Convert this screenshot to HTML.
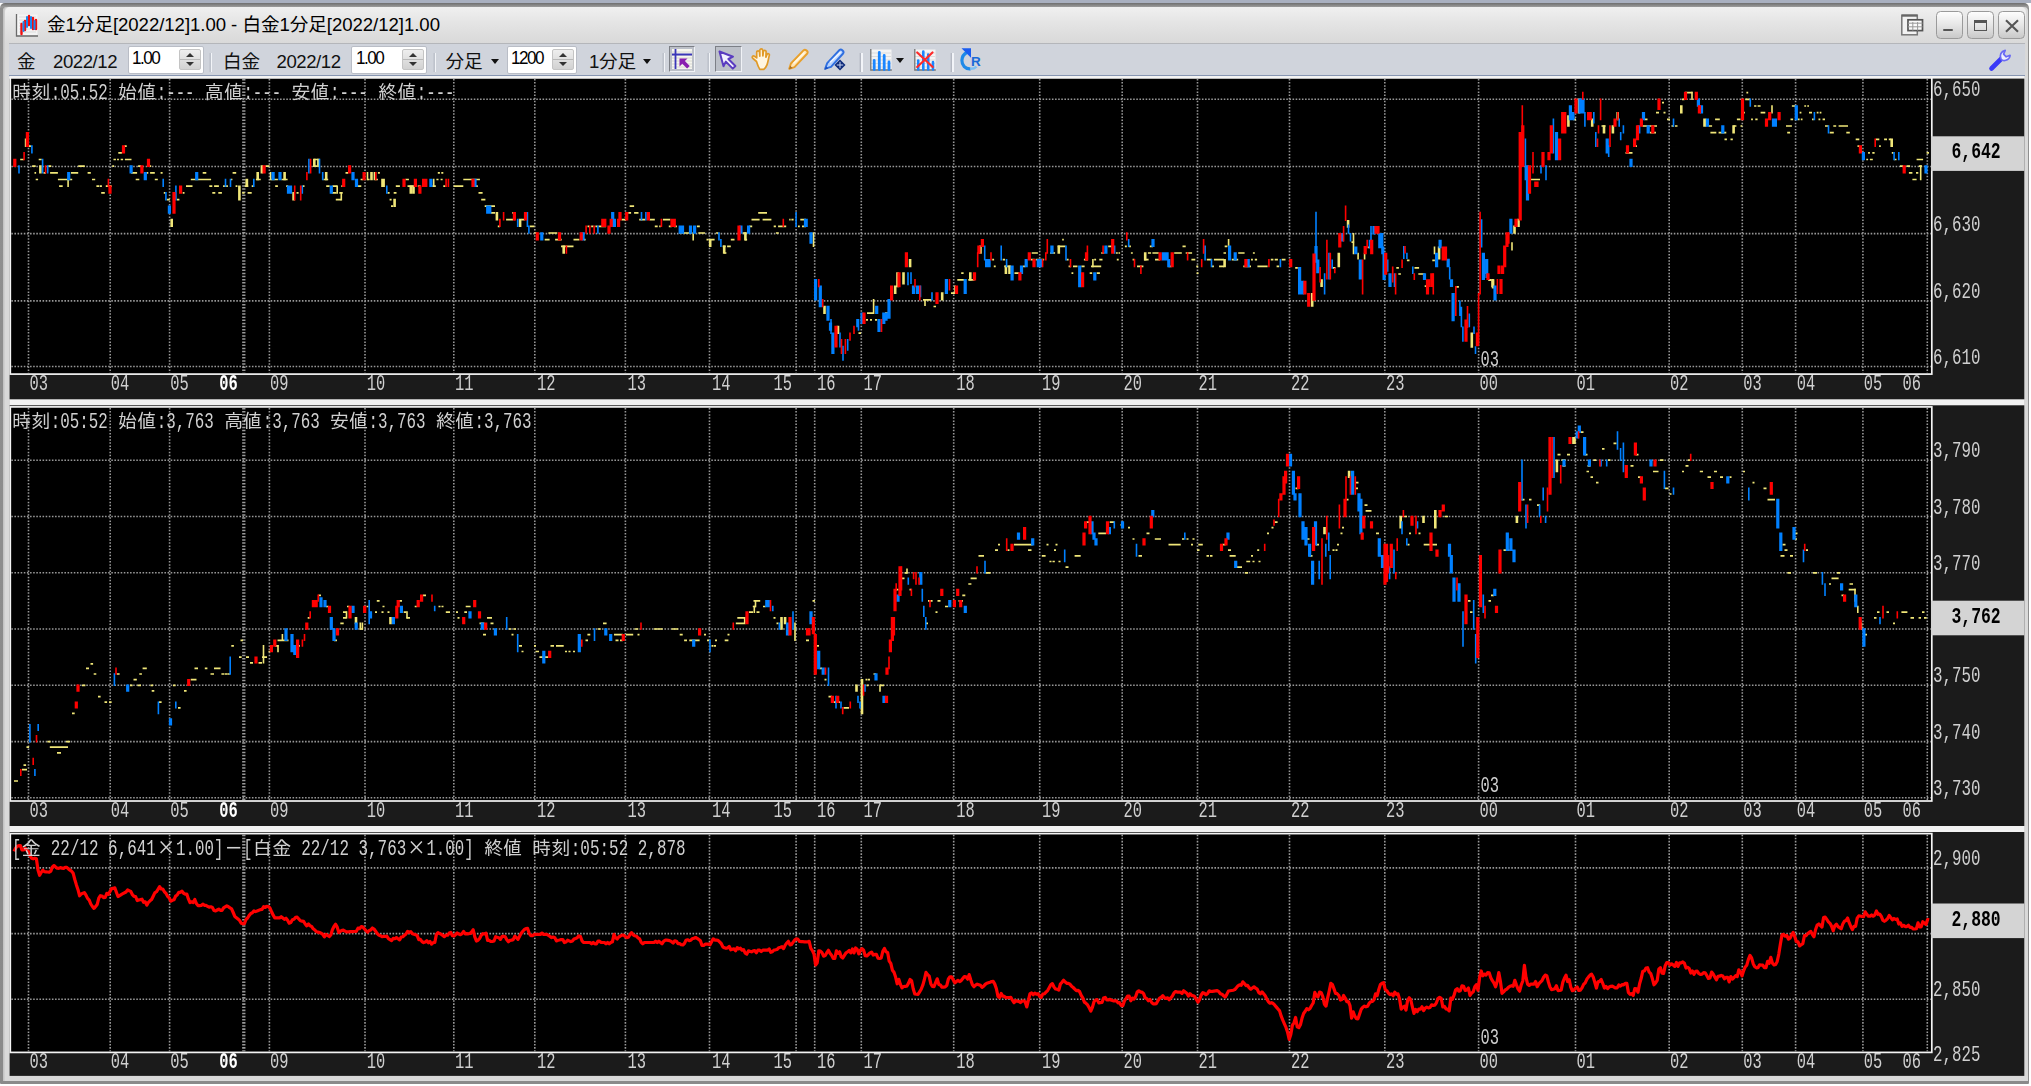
<!DOCTYPE html>
<html lang="ja"><head><meta charset="utf-8"><title>金1分足[2022/12]1.00 - 白金1分足[2022/12]1.00</title>
<style>
html,body{margin:0;padding:0}
body{width:2031px;height:1086px;position:relative;overflow:hidden;background:#fff;font-family:"Liberation Sans","Noto Sans CJK JP",sans-serif}
.abs{position:absolute}
#top{left:0;top:0;width:2031px;height:2.6px;background:#a9b0c0}
#win{left:0;top:2.6px;width:2029.2px;height:1081.2px;background:linear-gradient(#6e6e6e,#9c9c9c 4px,#909090 5px,#8a8a8a);border-radius:5px 5px 1px 1px}
#winin{left:3.4px;top:6.6px;width:2024.2px;height:1074.8px;background:#d9d9d9;border-radius:4px 4px 0 0;box-shadow:inset 1.5px 0 0 #c4c4c4}
#title{left:5px;top:7px;width:2021px;height:35.5px;background:linear-gradient(#f0f0f0,#e4e4e4 45%,#d9d9d9);border-radius:5px 5px 0 0}
#ttext{left:47px;top:12.5px;font-size:18.6px;line-height:24px;color:#000;white-space:nowrap;letter-spacing:-0.05px}
#tb{left:9px;top:43px;width:2016px;height:31.5px;background:#d0d4dc;border-top:1px solid #b4b6ba;box-sizing:border-box}
#tbline{left:9px;top:74.5px;width:2016px;height:1.7px;background:#8796b2}
.tl{position:absolute;top:49.5px;font-size:18.6px;line-height:24px;color:#111;white-space:nowrap}
.num{letter-spacing:-0.45px}
.inp{position:absolute;top:46.3px;height:27.4px;background:#fff;border:1px solid #b9bdc6;box-sizing:border-box;border-radius:2px}
.inp span{position:absolute;left:3.5px;top:-1.5px;font-size:19px;line-height:24px;color:#000;letter-spacing:-1.7px;transform:scaleX(.9);transform-origin:left}
.spin{position:absolute;right:2px;top:1.6px;width:22px;height:21.5px;background:linear-gradient(#eeeeee,#d2d2d2);border:1px solid #c4c4c4;box-sizing:border-box;border-radius:2px}
.spin:before{content:"";position:absolute;left:6px;top:3px;border:4.2px solid transparent;border-top:0;border-bottom:4.5px solid #333}
.spin:after{content:"";position:absolute;left:6px;bottom:3px;border:4.2px solid transparent;border-bottom:0;border-top:4.5px solid #333}
.spin i{position:absolute;left:0;right:0;top:9.4px;height:1px;background:#b8b8b8}
.sep{position:absolute;top:52.5px;width:1.6px;height:19px;background:#f2f4f8;box-shadow:-1.4px 0 0 #b4b8c2}
.dd{position:absolute;top:58.5px;border:4.6px solid transparent;border-bottom:0;border-top:5.2px solid #111}
.btnp{position:absolute;top:45.8px;width:26px;height:26.6px;background:#bcc0c8;border:1.4px solid #7c7f86;border-right-color:#f0f2f6;border-bottom-color:#f0f2f6;box-sizing:border-box}
.wb{position:absolute;top:11.2px;width:26.8px;height:27.5px;border:1.4px solid #9a9a9a;border-radius:4.5px;box-sizing:border-box;background:linear-gradient(#fdfdfd,#e6e6e6 50%,#c9c9c9)}
#sepw{left:9.6px;width:2014.7px;background:#f2f2f2}
</style></head><body>
<div id="top" class="abs"></div>
<div id="win" class="abs"></div>
<div id="winin" class="abs"></div>
<div id="title" class="abs"></div>
<svg class="abs" style="left:15px;top:13px" width="24" height="24" viewBox="0 0 24 24">
<rect x="1.5" y="1.5" width="21" height="21" fill="#f4f4f4"/><path d="M1.5 1v22h21.5" stroke="#6a6a6a" stroke-width="1.3" fill="none"/>
<path d="M4 4h17M4 7h17M4 10h17M4 13h17M4 16h17M4 19h17" stroke="#dcdcdc" stroke-width="1"/>
<path d="M6.5 11v10M10 8v9M14 3v9M18 5v11M21 7v9" stroke="#f01010" stroke-width="2.4" stroke-linecap="round"/>
<path d="M8.5 9v9M12 4v10M16 4v11M19.5 8v8" stroke="#1a86f0" stroke-width="2" stroke-linecap="round"/>
</svg>
<div id="ttext" class="abs">金1分足[2022/12]1.00 - 白金1分足[2022/12]1.00</div>
<!-- window buttons -->
<svg class="abs" style="left:1900px;top:13px" width="25" height="25" viewBox="0 0 25 25">
<rect x="1.8" y="2.2" width="15.5" height="19.6" fill="#f2f2f2" stroke="#777" stroke-width="1.5"/><path d="M1.8 2.6h15.5" stroke="#666" stroke-width="2.2"/>
<rect x="8" y="6.8" width="14.5" height="10.8" fill="#fafafa" stroke="#555" stroke-width="1.7"/><path d="M8 10.2h14.5M8 13.8h14.5M12.8 9v8.6M17.6 9v8.6" stroke="#999" stroke-width="1"/>
</svg>
<div class="wb" style="left:1935.8px"><div class="abs" style="left:6.5px;top:16.4px;width:9.6px;height:2.9px;background:#555;border-radius:1px"></div></div>
<div class="wb" style="left:1967px"><div class="abs" style="left:6.2px;top:7.4px;width:12.4px;height:11.4px;border:1.7px solid #555;border-top-width:3px;box-sizing:border-box"></div></div>
<div class="wb" style="left:1998.4px"><svg class="abs" style="left:5.6px;top:6.4px" width="14" height="14" viewBox="0 0 14 14"><path d="M1 1.2l12 11.6M13 1.2L1 12.8" stroke="#555" stroke-width="2.1"/></svg></div>
<!-- toolbar -->
<div id="tb" class="abs"></div><div id="tbline" class="abs"></div>
<div class="tl" style="left:17px">金</div><div class="tl num" style="left:53px">2022/12</div>
<div class="inp" style="left:127.5px;width:76px"><span>1.00</span><div class="spin"><i></i></div></div>
<div class="sep" style="left:210.5px"></div>
<div class="tl" style="left:223px">白金</div><div class="tl num" style="left:276.5px">2022/12</div>
<div class="inp" style="left:351px;width:76px"><span>1.00</span><div class="spin"><i></i></div></div>
<div class="sep" style="left:434.5px"></div>
<div class="tl" style="left:445.5px">分足</div><div class="dd" style="left:491px"></div>
<div class="inp" style="left:506.7px;width:70px"><span>1200</span><div class="spin"><i></i></div></div>
<div class="tl" style="left:589px"><span class="num">1</span>分足</div><div class="dd" style="left:642.8px"></div>
<div class="sep" style="left:663.6px"></div>
<div class="btnp" style="left:668.8px"></div>
<svg class="abs" style="left:671px;top:48px" width="22" height="22" viewBox="0 0 22 22">
<rect x="1" y="1" width="20" height="20" fill="#f6f6f0"/><path d="M1 4h20M1 7h20M1 10h20M1 13h20M1 16h20M1 19h20" stroke="#d8d8d0" stroke-width="1"/>
<path d="M4.5 1v20M1 6.5h20" stroke="#3a36b8" stroke-width="1.8"/><path d="M8.5 10.5h8l-2.6 2.6 4.8 4.8-2.6 2.6-4.8-4.8-2.8 2.8z" fill="#8a1fb0"/>
</svg>
<div class="sep" style="left:708.8px"></div>
<div class="btnp" style="left:714.6px;width:27px"></div>
<svg class="abs" style="left:716px;top:48px" width="24" height="24" viewBox="0 0 24 24">
<path d="M3.5 3.5l13.5 5.2-4.6 2.3 7 7-2.6 2.6-7-7-2.3 4.6z" fill="#f4f2ff" stroke="#5a3cc0" stroke-width="2" stroke-linejoin="round"/>
</svg>
<svg class="abs" style="left:750px;top:47px" width="24" height="25" viewBox="0 0 24 25">
<path d="M6.5 14.5L3 11.5c-1.6-1.2-.2-3.2 1.5-2.2l2.2 1.6V5.2c0-1.8 2.6-1.8 2.8 0l.3 4V3.3c0-1.8 2.8-1.8 2.9 0l.2 5.6.5-4.4c.2-1.7 2.8-1.5 2.7.3l-.2 5.4 1-2.6c.7-1.6 2.9-.8 2.4.8-1 3.8-1.2 6.500-2.200 9.200-.8 2.200-2 3.600-3.300 4.800H9.800c-1.500-2.400-2.300-4.600-3.300-7.900z" fill="#fff6e2" stroke="#e09a28" stroke-width="1.7" stroke-linejoin="round"/>
</svg>
<svg class="abs" style="left:786px;top:47px" width="25" height="25" viewBox="0 0 25 25">
<path d="M3.2 21.800l1.700-5.300L17.700 3.200c1.600-1.500 5 1.400 3.600 3.300L8.500 20.100z" fill="#ffe6b8" stroke="#e8a02c" stroke-width="1.9" stroke-linejoin="round"/><path d="M3 22.200l1.300-3.500 2.200 2.300z" fill="#a8702a"/><path d="M7.500 16.500L18.500 5.600" stroke="#fff8e6" stroke-width="1.600"/>
</svg>
<svg class="abs" style="left:822px;top:47px" width="26" height="25" viewBox="0 0 26 25">
<path d="M3.200 21.600l2-5.500L17.500 3c1.800-1.500 5.200 1.600 3.600 3.500L9 19.800z" fill="#b8d4ff" stroke="#2f6fe0" stroke-width="1.900" stroke-linejoin="round"/><path d="M2.200 23l2-3.600 2 2z" fill="#1a4fc0"/><path d="M8 15.500L18.600 5.200" stroke="#eef4ff" stroke-width="1.700"/>
<path d="M18 12.500l5.500 5.500-5.500 5.500-5.500-5.500z" fill="#0c2a7a"/><path d="M18 14.800v6.400M14.800 18h6.400" stroke="#c8d4f0" stroke-width="1"/>
</svg>
<div class="sep" style="left:861.4px"></div>
<svg class="abs" style="left:869px;top:48px" width="24" height="24" viewBox="0 0 24 24">
<rect x="2" y="1.500" width="20.500" height="20" fill="#f4f4f4"/><path d="M2 5h20M2 8.500h20M2 12h20M2 15.500h20M2 19h20" stroke="#dcdcdc" stroke-width="1"/>
<path d="M1.800 1v21h21" stroke="#777" stroke-width="1.300" fill="none"/>
<path d="M5.200 21.500v-9M10.300 21.500V4.500M15.200 21.500V7.500M20 21.500v-7.500" stroke="#1a86ff" stroke-width="2.800" stroke-linecap="round"/>
</svg>
<div class="dd" style="left:896.300px;top:58.200px"></div>
<svg class="abs" style="left:912.500px;top:48px" width="24" height="24" viewBox="0 0 24 24">
<rect x="2" y="1.500" width="20.500" height="20" fill="#f4f4f4"/><path d="M2 5h20M2 8.500h20M2 12h20M2 15.500h20M2 19h20" stroke="#dcdcdc" stroke-width="1"/>
<path d="M1.800 1v21h21" stroke="#777" stroke-width="1.300" fill="none"/>
<path d="M5.200 21.500v-9M10.300 21.500V3.500M15.200 21.500V6.500M20 21.500v-7.500" stroke="#1a86ff" stroke-width="2.600" stroke-linecap="round"/>
<path d="M4.200 4.500l15.500 14.500M19.500 4.500L4.200 19" stroke="#ff2a2a" stroke-width="2.200" stroke-linecap="round"/>
</svg>
<div class="sep" style="left:952px"></div>
<svg class="abs" style="left:958px;top:46px" width="26" height="27" viewBox="0 0 26 27">
<path d="M12.500 22.800c-5.200.4-8.700-3.700-8.600-8.400.1-3.800 2.300-6.700 5.300-8.200" stroke="#1e8ae8" stroke-width="3.200" fill="none"/><path d="M12.500 22.800c2.600 0 4.600-.8 6-2.200" stroke="#7cc0f4" stroke-width="2.400" fill="none"/>
<path d="M3.500 2.200h9.500v9.500z" fill="#1a5cf0"/>
<text x="13" y="19.500" font-family="'Liberation Sans',sans-serif" font-weight="bold" font-size="13.500" fill="#1a6ad8">R</text>
</svg>
<svg class="abs" style="left:1988px;top:47px" width="26" height="25" viewBox="0 0 26 25">
<path d="M3.500 21.500L13.500 11.500" stroke="#3a3af8" stroke-width="4.600" stroke-linecap="round"/>
<path d="M13 12c-1.800-3.400 0-7.800 4.200-8.600l-1.600 3.800 2.600 2.600 3.900-1.500c-.3 4.200-4.800 6.300-8.200 4.600z" fill="#f0f0ff" stroke="#6a6af4" stroke-width="1.700" stroke-linejoin="round"/>
</svg>
<!-- chart area -->
<div class="abs" id="sepw" style="top:76.2px;height:1000px;"></div>
<svg width="2031" height="1086" viewBox="0 0 2031 1086" style="position:absolute;left:0;top:0;will-change:transform" font-family="'Liberation Mono','IPAGothic',monospace" font-size="22">
<rect x="9.6" y="76.3" width="2014.7" height="2.5" fill="#f4f4f4"/><rect x="9.6" y="78.6" width="2014.7" height="320.7" fill="#1b1b1b"/>
<rect x="10.3" y="77.9" width="1921.5" height="296.2" fill="#000" stroke="#f4f4f4" stroke-width="1.7"/>
<path d="M11.3 99.3H1930.8M11.3 166.5H1930.8M11.3 233.6H1930.8M11.3 300.9H1930.8M11.3 366.5H1930.8M28.5 78.9V373.1M110.2 78.9V373.1M169.6 78.9V373.1M269.4 78.9V373.1M365 78.9V373.1M453.8 78.9V373.1M534.8 78.9V373.1M625.4 78.9V373.1M709.5 78.9V373.1M796.1 78.9V373.1M814.7 78.9V373.1M861.3 78.9V373.1M953.7 78.9V373.1M1039.7 78.9V373.1M1122.2 78.9V373.1M1197.5 78.9V373.1M1289.5 78.9V373.1M1384.8 78.9V373.1M1478.6 78.9V373.1M1575.5 78.9V373.1M1669.2 78.9V373.1M1742.3 78.9V373.1M1795.6 78.9V373.1M1862.9 78.9V373.1M1927.3 78.9V373.1" stroke="#989898" stroke-width="1.6" stroke-dasharray="1.5625 1.5625" fill="none"/>
<path d="M243.8 78.9V373.1" stroke="#989898" stroke-width="3.3" stroke-dasharray="1.5625 1.5625" fill="none"/>
<path d="M858.5 333.2H861M866 319.9H868M870 319.9H872M875 319.9H877M867 313.2H873M885 313.2H888M933.5 306.5H936M923 299.8H931.5M951 293.1H955M1456.3 286.9H1458.9M1424.7 286.2H1427.3M1489 280.1H1491.6M957.3 279.8H964.4M968.3 279.8H974.5M1488 279.8H1491M1398.3 274H1400.9M1418.3 274H1424.7M961.2 273.1H963.6M1014.5 273.1H1019.2M1071.5 273.1H1073.3M1089.7 273.1H1092.2M1096.7 273.1H1099.9M1196.6 273.1H1198.5M1295.2 267.9H1297.8M1332.9 267.9H1335.5M1396.3 267.9H1398.9M1414.5 267.9H1419.1M993.8 266.4H995.7M1004.3 266.4H1010.6M1023.1 266.4H1025.4M1068.6 266.4H1071.1M1073 266.4H1077.5M1081.4 266.4H1084.6M1091 266.4H1101.2M1137 266.4H1143.4M1168.4 266.4H1171.6M1196.3 266.4H1198.2M1211.9 266.4H1213.9M1219 266.4H1224.1M1243.3 266.4H1251M1257.4 266.4H1267.6M1276.6 266.4H1279.1M1406.9 260.3H1409.5M1432.3 260.3H1434.9M992.2 259.7H994.1M1002.7 259.7H1005.1M1030.9 259.7H1034.8M1035.6 259.7H1044.2M1066.6 259.7H1068.6M1083.9 259.7H1087.8M1094.2 259.7H1096.1M1099.3 259.7H1102.5M1116.8 259.7H1118.7M1132.6 259.7H1134.5M1144.1 259.7H1148.6M1155 259.7H1160.1M1191.4 259.7H1195.3M1206.8 259.7H1211.9M1213.9 259.7H1224.1M1231.8 259.7H1238.2M1251 259.7H1252.9M1254.8 259.7H1257.1M1270.8 259.7H1273.4M1274.7 259.7H1277.9M1281.7 259.7H1285.5M724.2 253H726.4M1031.7 253H1037.9M1050 253H1055.1M1101.2 253H1104.4M1115.9 253H1117.8M1118.5 253H1120.1M1130.9 253H1132.8M1147.9 253H1151.1M1152.4 253H1158.8M1174.2 253H1181.8M1185.7 253H1192.1M1223.5 253H1226M1238.2 253H1244.6M1252.9 253H1254.8M1367.7 247.4H1370.3M561 246.3H573.5M722.7 246.3H725.7M727.1 246.3H730.8M1057.7 246.3H1065.4M1108.2 246.3H1114M1124.9 246.3H1126.8M1128.7 246.3H1130.9M1149.8 246.3H1153M1182.5 246.3H1185.7M1224.7 246.3H1227.3M1351.5 242.1H1354.1M544.7 239.7H549.6M555.1 239.7H561.7M573.5 239.7H579.4M583.9 239.7H585.6M706.5 239.7H708.7M710.1 239.7H714.6M730.8 239.7H734.5M744.9 239.7H747.1M1062.2 239.7H1063.8M534.4 233H536.6M548.4 233H557.3M679.1 233H691.7M698.3 233H705M716.1 233H718.3M742.6 233H746.3M775.9 233H778.8M497.8 226.3H499.9M529.9 226.3H534.4M587.5 226.3H589.3M591.2 226.3H593.5M595.4 226.3H597.4M598.6 226.3H606M654.8 226.3H657.7M659.2 226.3H660.7M668.8 226.3H671.7M674 226.3H676.9M696.9 226.3H699.8M749.3 226.3H752.2M773.7 226.3H775.9M778.1 226.3H786.2M798 226.3H799.8M802 226.3H806M506.1 219.6H513M521.1 219.6H524.8M621.5 219.6H626M639.2 219.6H645.2M649.6 219.6H654.8M662.9 219.6H670.3M751.5 219.6H759.6M762.6 219.6H771.4M789.2 219.6H790.6M791.4 219.6H793.6M800.3 219.6H806M490.9 212.9H495M512.2 212.9H514.4M628.2 212.9H631.1M634.1 212.9H638.5M758.2 212.9H767M391 206.2H393M484.7 206.2H495M629.6 206.2H634.1M166.8 199.6H169.8M177 199.6H179.4M335.8 199.6H341.3M389.6 199.6H391.6M481.2 199.6H485.4M101.2 192.9H104.8M163.8 192.9H165.6M182.7 192.9H184.5M212.3 192.9H215.3M218.3 192.9H221.9M242.2 192.9H244.6M247.6 192.9H251.7M296.5 192.9H298.6M331.7 192.9H336.5M339.3 192.9H342.7M387.5 192.9H389.6M393.7 192.9H396.5M478.5 192.9H482.6M59.1 186.2H62.7M96.4 186.2H99.2M99.8 186.2H101.9M105.8 186.2H111.7M186 186.2H192.5M209.3 186.2H212.3M214.1 186.2H218.9M223.1 186.2H224.9M226.1 186.2H227.9M235.6 186.2H237.4M244.8 186.2H248.2M251.7 186.2H253.8M275.2 186.2H277.9M286.2 186.2H288.2M302.7 186.2H304.5M326.2 186.2H329.6M332.4 186.2H337.2M341.3 186.2H343.4M356.5 186.2H361.3M395.8 186.2H399.9M407.5 186.2H413.7M417.8 186.2H420.6M432.3 186.2H435.8M443.3 186.2H445.4M453.7 186.2H463.3M474.4 186.2H477.8M35.7 179.5H38.1M57.9 179.5H72.2M92 179.5H95.2M135.7 179.5H139.3M154.8 179.5H157.8M190.8 179.5H211.1M230.9 179.5H232.4M255.9 179.5H260.7M271 179.5H277.9M281.4 179.5H287.6M323.4 179.5H328.2M360.6 179.5H363.4M367.5 179.5H369.6M375.8 179.5H377.9M405.4 179.5H408.9M436.4 179.5H438.5M440.6 179.5H442.6M463.3 179.5H479.9M1531 179.5H1540M1912.4 179.5H1916.6M34.5 172.8H36.1M43.5 172.8H45.9M50.1 172.8H57.9M71 172.8H78.2M87.6 172.8H90.8M131.1 172.8H137.1M146.5 172.8H148.3M150.1 172.8H154.8M160.6 172.8H162.6M202.7 172.8H206.3M232.6 172.8H236.2M345.5 172.8H348.2M377.9 172.8H379.9M437.8 172.8H439.9M441.3 172.8H443.3M1908.9 172.8H1912.4M1916 172.8H1918.3M32.1 166.1H35.7M48.3 166.1H51.3M78.2 166.1H84.8M112.3 166.1H114.1M138.1 166.1H141.1M147.7 166.1H151.2M265.5 166.1H269.6M313.1 166.1H317.2M1900 166.1H1903M1906.5 166.1H1910.1M1918.9 166.1H1921.9M20.2 159.5H23.8M38.7 159.5H41.7M113.5 159.5H115.9M117.1 159.5H118.9M120.7 159.5H123.1M124.9 159.5H131.5M313.8 159.5H318.6M1866.3 159.5H1868.1M1869.9 159.5H1872.8M1894.1 159.5H1896.5M1916.6 159.5H1923.1M118.3 152.8H121.9M1625.5 152.8H1632.5M1868.1 152.8H1869.9M1872.3 152.8H1874.6M1891.8 152.8H1893.5M1926.6 152.8H1929M28 146.1H30.9M124.3 146.1H126.7M1633 146.1H1637M1857.5 146.1H1859.3M1879.1 146.1H1880.8M1724.5 139.4H1726.9M1730.5 139.4H1732.8M1855.7 139.4H1859.3M1875.8 139.4H1879.3M1884.1 139.4H1887M1888.8 139.4H1891.2M1650 132.7H1656M1710.4 132.7H1716.3M1718.6 132.7H1726.3M1787.2 132.7H1790.1M1829.7 132.7H1833.8M1846.3 132.7H1849.8M1601.5 126H1605.5M1642.5 126H1657M1671.5 126H1674M1675 126H1677.5M1708.6 126H1712.1M1733.4 126H1736.4M1740.5 126H1742.3M1786 126H1791.9M1825 126H1828.5M1833.3 126H1836.2M1838.6 126H1848M1573 119.4H1576M1644.5 119.4H1647.5M1667 119.4H1670M1715.1 119.4H1719.8M1736.9 119.4H1740.5M1751.1 119.4H1752.9M1755.3 119.4H1757.6M1790.5 119.4H1793.1M1797.8 119.4H1799.6M1800.8 119.4H1802.5M1812 119.4H1813.8M1818.5 119.4H1820.3M1822.6 119.4H1825M1656 112.7H1659M1663.5 112.7H1665.5M1743.4 112.7H1744.9M1760.6 112.7H1765.3M1799.6 112.7H1801.4M1809 112.7H1812M1816.7 112.7H1818.5M1819.7 112.7H1821.4M1754.1 106H1756.4M1757.6 106H1760.6M1791.9 106H1795.4M1804.3 106H1806.1M1807.3 106H1809M1662 102.6H1664M1682 99.3H1684.5M1745.2 99.3H1749.9M1685 92.6H1692.5M1746.4 92.6H1748.2" stroke="#f0e678" stroke-width="1.7" fill="none"/>
<path d="M1311.7 293V306.7M1312.7 293V306.7M1321.1 279.3V287M1322.1 279.3V287M1338.3 252.7V267.2M1339.3 252.7V267.2M1347.6 220V227.7M1348.6 220V227.7M1353.5 233V254.3M1358.1 252.7V259.6M1364.6 252.7V259.6M1434.5 246.6V254.3M1438.6 246.6V259.6M1439.6 246.6V259.6M1471.3 332.5V347.8M1472.3 332.5V347.8M1492.6 279.3V288.5M1493.6 279.3V288.5M1492 279V287.2M1493 279V287.2M1512 242.2V250.5M1514 225.5V233.8M1515 225.5V233.8M1518 218.8V227.1M1519 218.8V227.1M1567.9 115.2V126.8M1568.9 115.2V126.8M1578.5 98.5V113.5M1579.5 98.5V113.5M1591.7 118.6V126.8M1592.7 118.6V126.8M1603.5 125.2V133.5M1604.5 125.2V133.5M1612.4 125.2V133.5M1613.4 125.2V133.5M1617.2 111.9V120.2M1618.2 111.9V120.2M1680.8 105.2V113.5M1681.8 105.2V113.5M1692 91.8V100.1M1704 118.6V126.8M1705 118.6V126.8M813.5 232.2V247.1M824 305.7V314M825 305.7V314M837.5 325.7V334M838.5 325.7V334M873.6 299V314M894.7 285.6V293.9M895.7 285.6V293.9M897 272.3V287.2M898 272.3V287.2M903 272.3V284.6M904 272.3V284.6M909.6 258.9V267.2M910.6 258.9V267.2M925 299V306M941.7 292.3V300.6M942.7 292.3V300.6M25.6 138.6V146.9M26.6 138.6V146.9M39.9 165.3V173.6M40.9 165.3V173.6M68.1 178.7V187M171.2 218.8V227.1M172.2 218.8V227.1M238.9 185.4V200.4M239.9 185.4V200.4M246.4 178.7V187M247.4 178.7V187M246.2 178.7V187M257.2 172V180.3M258.2 172V180.3M261.4 165.3V173.6M262.4 165.3V173.6M270.6 172V180.3M284.1 172V180.3M285.1 172V180.3M293.1 192.1V200.4M294.1 192.1V200.4M313.8 158.7V166.9M314.8 158.7V166.9M317.9 158.7V166.9M318.9 158.7V166.9M325.7 172V180.3M326.7 172V180.3M337.2 185.4V193.7M341.3 192.1V200.4M367.5 172V180.3M371 172V180.3M372 172V180.3M374.4 172V180.3M375.4 172V180.3M382 178.7V187M383 178.7V187M384.1 178.7V187M394.1 198.8V207M395.1 198.8V207M410.3 185.4V193.7M411.3 185.4V193.7M413 185.4V193.7M414 185.4V193.7M433.7 178.7V187M496.4 212.1V220.4M497.4 212.1V220.4M519.6 218.8V227.1M520.6 218.8V227.1M563.2 245.5V253.8M564.2 245.5V253.8M693.2 232.2V240.5M709.7 238.9V247.1M710.7 238.9V247.1M723.7 245.5V253.8M724.7 245.5V253.8M744.9 232.2V240.5M745.9 232.2V240.5M955 285.6V293.9M969.8 272.3V280.6M970.8 272.3V280.6M980 245.5V253.8M981 245.5V253.8M1005.4 265.6V273.9M1006.4 265.6V273.9M1009 265.6V273.9M1010 265.6V273.9M1058.3 245.5V253.8M1059.3 245.5V253.8M1092.9 258.9V267.2M1144.7 252.2V260.5M1145.7 252.2V260.5M1224.1 258.9V267.2M1225.1 258.9V267.2M1228.6 238.9V247.1M1704.5 118.6V126.8M1705.5 118.6V126.8M1733.1 125.2V133.5M1734.1 125.2V133.5M1772 105.2V113.5M1891.2 138.6V146.9M1892.2 138.6V146.9M1920.7 165.3V180.3" stroke="#f0e678" stroke-width="1.6" fill="none"/>
<path d="M1299.6 267.1V294.6M1302.6 280.8V294.6M1316 245.9V262.7M1317.8 259.5V273.3M1342.4 233V241.4M1355.8 246.6V254.3M1360.3 259.5V279.4M1374 226.1V234.6M1379.8 233V248.2M1381.8 233V248.2M1382.8 246.6V254.3M1384.1 252.7V280.1M1390 273.2V287M1424.5 273.2V280.1M1436.6 252.7V267.2M1440.1 239.8V248.2M1448.2 258.8V267.2M1451.5 279.3V287M1453.1 293V321.2M1483.4 252.7V280.1M1486.7 258.9V273.9M1495 285.6V300.6M1510.9 218.8V233.8M1527.5 165.3V200.4M1556.5 131.9V160.3M1570.4 105.2V120.2M1573 111.9V120.2M1580 98.5V113.5M1583 98.5V113.5M1607.2 138.6V153.6M1631 158.7V166.9M1638.8 125.2V133.5M1643.5 111.9V120.2M1648.2 125.2V133.5M1698.4 98.5V106.8M1701.5 105.2V113.5M805.5 218.8V227.1M811 232.2V243.8M815.6 279V300.6M820.3 285.6V307.3M828 305.7V320.7M830.5 322.4V330.7M832.9 332.4V354.1M862 312.4V324M876.7 305.7V314M879 319.1V332M883.8 312.4V324M886 312.4V320.7M889 299V318.7M913.5 285.6V293.9M917.4 285.6V293.9M946.4 279V293.9M68.7 172V180.3M131.1 165.3V173.6M145.3 172V180.3M169.4 205.4V213.7M196.7 172V180.3M273.1 172V180.3M280 172V180.3M288.5 185.4V193.7M290.5 185.4V193.7M331.3 185.4V193.7M353 172V180.3M356.5 178.7V187M430.9 178.7V187M475 178.7V187M487.7 205.4V213.7M489.8 205.4V213.7M541.8 232.2V240.5M583.1 232.2V240.5M612.7 212.1V227.1M614.4 218.8V227.1M680.2 225.5V233.8M682.5 225.5V233.8M690.5 225.5V233.8M694.6 225.5V233.8M740.9 225.5V233.8M748.6 225.5V233.8M806.2 218.8V227.1M965.2 279V293.9M986.6 258.9V267.2M989.1 258.9V267.2M1012.1 265.6V280.6M1021.5 265.6V273.9M1026.2 258.9V267.2M1038.3 258.9V267.2M1040.8 258.9V267.2M1052 245.5V253.8M1051.9 245.5V253.8M1079.7 265.6V287.2M1094.8 272.3V280.6M1105.9 245.5V253.8M1153 238.9V247.1M1163.3 252.2V260.5M1165.2 252.2V260.5M1167.1 252.2V260.5M1168.8 258.9V267.2M1229.6 245.5V260.5M1235.2 252.2V260.5M1248.2 258.9V267.2M1707.4 118.6V126.8M1722.8 125.2V133.5M1773.5 118.6V126.8M1775.4 118.6V126.8M1796.3 105.2V120.2M1863.4 152V160.3M1926 165.3V173.6" stroke="#0080ff" stroke-width="3.2" fill="none"/>
<path d="M1316 211.7V247.5M1324.6 273.2V294.6M1329 252.7V279.4M1332.2 259.5V268.7M1348.5 224.6V233.8M1350.5 233V241.4M1369.5 239.8V248.2M1371 226.1V241.4M1387.7 259.5V271.8M1394.5 273.2V287M1403.8 245.9V258.9M1406.9 252.7V258.9M1412.8 266.4V274.1M1449.7 267.1V279.4M1459.9 300.6V315.9M1461.4 306.7V327.3M1462.9 326.4V341.7M1469.3 313.5V327.3M1474 326.4V334.1M1475.5 346.2V353.9M1481.6 219.3V247.5M1486.2 259.5V277.9M1525.4 138.6V180.3M1541 165.3V173.6M1546 165.3V180.3M1553.4 118.6V153.6M1584.9 111.9V126.8M1593.8 111.9V123.5M1595.8 131.9V146.9M1608.7 145.3V156.9M1619.2 118.6V126.8M1620.7 131.9V140.2M1623.4 125.2V133.5M1673.5 118.6V126.8M831 319.1V334M840 332.4V347.4M843 345.8V360.8M847.7 339.1V350.7M857 319.1V327.3M858.5 319.1V330.7M908 272.3V285.2M911 272.3V283.9M920.5 285.6V297.3M932 292.3V300.6M19 165.3V173.6M31.9 145.3V153.6M42.6 158.7V173.6M47.7 165.3V173.6M163.2 178.7V187M165.9 192.1V200.4M175.9 185.4V200.4M225.5 178.7V187M230.5 178.7V187M253.8 178.7V187M302.3 185.4V193.7M308.9 158.7V173.6M319.5 158.7V173.6M322.7 172V180.3M386.8 185.4V193.7M517.7 218.8V227.1M527.4 212.1V227.1M528.9 225.5V233.8M597.9 225.5V233.8M641.5 212.1V220.4M645.9 212.1V220.4M719 232.2V240.5M720.9 238.9V247.1M796.1 212.1V227.1M984.7 245.5V260.5M1001.2 245.5V260.5M1006.6 258.9V267.2M1066 245.5V260.5M1114.6 245.5V253.8M1128.7 238.9V247.1M1205.1 245.5V260.5M1211.5 258.9V267.2M1280.4 258.9V267.2M1750.3 98.5V106.8M1814.4 111.9V120.2M1828.5 125.2V133.5M1894.1 152V160.3M1898.8 152V160.3" stroke="#0080ff" stroke-width="1.6" fill="none"/>
<path d="M1304.9 280.8V294.6M1308.7 293V306.7M1314 253.5V300.7M1339.8 233V247.5M1365.2 245.9V254.3M1371.7 239.8V254.3M1376 226.1V233.8M1378 226.1V233.8M1385.7 252.7V274.8M1427.5 279.3V294.6M1431.8 273.2V287M1443.2 246.6V260.4M1445.5 246.6V260.4M1466 319.6V341.7M1477.4 332.5V346.3M1488 273.2V280.1M1499 265.6V273.9M1501 279V293.9M1502.6 265.6V273.9M1504.7 245.5V267.2M1507 232.2V247.1M1516 218.8V227.1M1520.2 131.9V220.4M1522.8 125.2V166.9M1529.5 165.3V193.7M1535.8 181.4V187M1537 181.4V187M1543 152V166.9M1549 152V160.3M1551.3 125.2V153.6M1559.6 138.6V160.3M1562.7 111.9V133.5M1564.8 111.9V133.5M1576 98.5V113.5M1588.6 111.9V120.2M1590.2 111.9V120.2M1615 118.6V126.8M1627.5 145.3V153.6M1634.6 138.6V146.9M1637.5 125.2V140.2M1641.4 118.6V126.8M1652.8 125.2V133.5M1659 98.5V110.1M1685.5 91.8V100.1M1696.3 91.8V100.1M1699.4 105.2V113.5M836 325.7V347.4M864 312.4V324M891.6 285.6V300.6M899 272.3V287.2M906.4 252.2V267.2M937 292.3V303.9M14.8 158.7V166.9M27.4 131.9V146.9M110 185.4V193.7M123.5 145.3V153.6M141.9 165.3V173.6M148.5 158.7V166.9M174 192.1V213.7M180.6 185.4V193.7M264.1 165.3V173.6M343.7 178.7V187M349.6 165.3V173.6M364.1 172V180.3M404 178.7V187M415.4 178.7V187M419.9 185.4V193.7M423.6 178.7V187M425.8 178.7V187M473 178.7V187M514.4 212.1V220.4M525.5 212.1V220.4M537.3 232.2V240.5M559.5 232.2V240.5M581.2 232.2V240.5M602.8 218.8V227.1M604.8 218.8V227.1M609 225.5V233.8M611.2 218.8V227.1M618.6 218.8V227.1M620 212.1V220.4M626.7 212.1V220.4M648.4 212.1V220.4M672 218.8V227.1M674.3 218.8V227.1M739 225.5V240.5M956.5 285.6V293.9M974.5 272.3V280.6M978.9 245.5V253.8M982.4 238.9V247.1M1019.9 272.3V280.6M1029.3 252.2V260.5M1034 258.9V267.2M1082.6 272.3V287.2M1086.5 252.2V260.5M1112.7 238.9V253.8M1160.1 252.2V260.5M1172.2 252.2V267.2M1245.9 258.9V267.2M1290.7 258.9V267.2M1742.5 98.5V120.2M1766.5 118.6V126.8M1769.7 111.9V120.2M1779.1 111.9V120.2M1860.4 145.3V153.6M1904.2 165.3V173.6" stroke="#ff0000" stroke-width="3.2" fill="none"/>
<path d="M1320.1 267.1V282.4M1326.9 239.8V279.4M1330.3 252.7V279.4M1334.8 267.9V273.3M1343.6 226.1V241.4M1345.6 205.6V220.9M1362.6 259.5V294.6M1367.2 239.8V248.2M1392.7 266.4V282.4M1395.6 273.2V294.6M1402.1 259.5V268M1405 245.9V253.6M1414.3 273.2V280.1M1429.5 279.3V287M1433.3 273.2V294.6M1455.8 286.1V315.9M1467.5 305.9V328M1478.6 293V344.7M1480.1 211.7V294.6M1497.4 279V293.9M1508.8 232.2V243.8M1522.3 105.2V166.9M1533 152V173.6M1582.8 91.8V100.1M1597.5 138.6V146.9M1598.5 125.2V133.5M1600.6 98.5V120.2M1610 125.2V146.9M1617.8 111.9V120.2M818.8 279V287.2M822.7 299V307.3M841.5 339.1V354.1M845.4 339.1V354.1M850 332.4V340.7M854 325.7V334M881.5 319.1V332M915 279V287.2M919.8 285.6V300.6M949.5 279V290.6M24.1 152V160.3M45.6 165.3V173.6M108.4 178.7V187M294.7 185.4V200.4M300.7 185.4V200.4M306.9 172V180.3M310.6 158.7V173.6M375.8 172V180.3M446.1 178.7V187M448.4 178.7V187M499.9 218.8V227.1M503.6 212.1V220.4M514.3 212.1V220.4M566.4 245.5V253.8M586.1 225.5V233.8M589.8 225.5V233.8M594.2 225.5V233.8M661.4 218.8V227.1M783.3 218.8V227.1M977.7 252.2V267.2M991 252.2V260.5M1042.6 258.9V267.2M1045.8 252.2V260.5M1047.3 238.9V253.8M1070.5 258.9V267.2M1087.4 245.5V260.5M1103.1 245.5V253.8M1126.8 232.2V240.5M1134.5 258.9V267.2M1140.9 265.6V273.9M1187.6 252.2V260.5M1201.7 258.9V267.2M1203.6 238.9V253.8M1268.9 258.9V267.2M1875.2 138.6V146.9" stroke="#ff0000" stroke-width="1.6" fill="none"/>
<text y="98.9" fill="#d0d0d0"><tspan x="12 31.3" font-size="19.3">時刻</tspan><tspan x="50.8" textLength="57" lengthAdjust="spacingAndGlyphs">:05:52</tspan> <tspan x="117.9 137.2" font-size="19.3">始値</tspan><tspan x="156.8" textLength="37.7" lengthAdjust="spacingAndGlyphs">:---</tspan> <tspan x="204.6 223.9" font-size="19.3">高値</tspan><tspan x="243.4" textLength="37.7" lengthAdjust="spacingAndGlyphs">:---</tspan> <tspan x="291.3 310.5" font-size="19.3">安値</tspan><tspan x="330.1" textLength="37.7" lengthAdjust="spacingAndGlyphs">:---</tspan> <tspan x="377.9 397.2" font-size="19.3">終値</tspan><tspan x="416.8" textLength="37.7" lengthAdjust="spacingAndGlyphs">:---</tspan></text>
<text y="366" fill="#d0d0d0"><tspan x="1480.5" textLength="18.5" lengthAdjust="spacingAndGlyphs">03</tspan></text>
<text y="389.6" fill="#d0d0d0"><tspan x="29.6" textLength="18.5" lengthAdjust="spacingAndGlyphs">03</tspan></text>
<text y="389.6" fill="#d0d0d0"><tspan x="110.8" textLength="18.5" lengthAdjust="spacingAndGlyphs">04</tspan></text>
<text y="389.6" fill="#d0d0d0"><tspan x="170.3" textLength="18.5" lengthAdjust="spacingAndGlyphs">05</tspan></text>
<text y="389.6" fill="#ffffff" font-weight="bold"><tspan x="219.3" textLength="18.5" lengthAdjust="spacingAndGlyphs">06</tspan></text>
<text y="389.6" fill="#d0d0d0"><tspan x="270.1" textLength="18.5" lengthAdjust="spacingAndGlyphs">09</tspan></text>
<text y="389.6" fill="#d0d0d0"><tspan x="366.8" textLength="18.5" lengthAdjust="spacingAndGlyphs">10</tspan></text>
<text y="389.6" fill="#d0d0d0"><tspan x="455.1" textLength="18.5" lengthAdjust="spacingAndGlyphs">11</tspan></text>
<text y="389.6" fill="#d0d0d0"><tspan x="537.1" textLength="18.5" lengthAdjust="spacingAndGlyphs">12</tspan></text>
<text y="389.6" fill="#d0d0d0"><tspan x="627.6" textLength="18.5" lengthAdjust="spacingAndGlyphs">13</tspan></text>
<text y="389.6" fill="#d0d0d0"><tspan x="712.1" textLength="18.5" lengthAdjust="spacingAndGlyphs">14</tspan></text>
<text y="389.6" fill="#d0d0d0"><tspan x="773.6" textLength="18.5" lengthAdjust="spacingAndGlyphs">15</tspan></text>
<text y="389.6" fill="#d0d0d0"><tspan x="817.1" textLength="18.5" lengthAdjust="spacingAndGlyphs">16</tspan></text>
<text y="389.6" fill="#d0d0d0"><tspan x="863.6" textLength="18.5" lengthAdjust="spacingAndGlyphs">17</tspan></text>
<text y="389.6" fill="#d0d0d0"><tspan x="956.3" textLength="18.5" lengthAdjust="spacingAndGlyphs">18</tspan></text>
<text y="389.6" fill="#d0d0d0"><tspan x="1041.9" textLength="18.5" lengthAdjust="spacingAndGlyphs">19</tspan></text>
<text y="389.6" fill="#d0d0d0"><tspan x="1123.6" textLength="18.5" lengthAdjust="spacingAndGlyphs">20</tspan></text>
<text y="389.6" fill="#d0d0d0"><tspan x="1198.5" textLength="18.5" lengthAdjust="spacingAndGlyphs">21</tspan></text>
<text y="389.6" fill="#d0d0d0"><tspan x="1291" textLength="18.5" lengthAdjust="spacingAndGlyphs">22</tspan></text>
<text y="389.6" fill="#d0d0d0"><tspan x="1386.1" textLength="18.5" lengthAdjust="spacingAndGlyphs">23</tspan></text>
<text y="389.6" fill="#d0d0d0"><tspan x="1479.6" textLength="18.5" lengthAdjust="spacingAndGlyphs">00</tspan></text>
<text y="389.6" fill="#d0d0d0"><tspan x="1576.4" textLength="18.5" lengthAdjust="spacingAndGlyphs">01</tspan></text>
<text y="389.6" fill="#d0d0d0"><tspan x="1670" textLength="18.5" lengthAdjust="spacingAndGlyphs">02</tspan></text>
<text y="389.6" fill="#d0d0d0"><tspan x="1743.3" textLength="18.5" lengthAdjust="spacingAndGlyphs">03</tspan></text>
<text y="389.6" fill="#d0d0d0"><tspan x="1796.7" textLength="18.5" lengthAdjust="spacingAndGlyphs">04</tspan></text>
<text y="389.6" fill="#d0d0d0"><tspan x="1863.7" textLength="18.5" lengthAdjust="spacingAndGlyphs">05</tspan></text>
<text y="389.6" fill="#d0d0d0"><tspan x="1902.6" textLength="18.5" lengthAdjust="spacingAndGlyphs">06</tspan></text>
<text y="96.4" fill="#d0d0d0"><tspan x="1933.1" textLength="47.4" lengthAdjust="spacingAndGlyphs">6,650</tspan></text>
<text y="230.7" fill="#d0d0d0"><tspan x="1933.1" textLength="47.4" lengthAdjust="spacingAndGlyphs">6,630</tspan></text>
<text y="298" fill="#d0d0d0"><tspan x="1933.1" textLength="47.4" lengthAdjust="spacingAndGlyphs">6,620</tspan></text>
<text y="363.6" fill="#d0d0d0"><tspan x="1933.1" textLength="47.4" lengthAdjust="spacingAndGlyphs">6,610</tspan></text>
<rect x="1931" y="136.3" width="93.3" height="34.6" fill="#d4d4d4"/>
<text y="158.4" fill="#000" font-weight="bold"><tspan x="1951.5" textLength="49.2" lengthAdjust="spacingAndGlyphs">6,642</tspan></text>
<rect x="9.6" y="405.3" width="2014.7" height="420.7" fill="#1b1b1b"/>
<rect x="10.3" y="406.9" width="1921.5" height="394.1" fill="#000" stroke="#f4f4f4" stroke-width="1.7"/>
<path d="M11.3 460.2H1930.8M11.3 516.5H1930.8M11.3 572.8H1930.8M11.3 629H1930.8M11.3 685.3H1930.8M11.3 741.6H1930.8M11.3 797.8H1930.8M28.5 407.9V800M110.2 407.9V800M169.6 407.9V800M269.4 407.9V800M365 407.9V800M453.8 407.9V800M534.8 407.9V800M625.4 407.9V800M709.5 407.9V800M796.1 407.9V800M814.7 407.9V800M861.3 407.9V800M953.7 407.9V800M1039.7 407.9V800M1122.2 407.9V800M1197.5 407.9V800M1289.5 407.9V800M1384.8 407.9V800M1478.6 407.9V800M1575.5 407.9V800M1669.2 407.9V800M1742.3 407.9V800M1795.6 407.9V800M1862.9 407.9V800M1927.3 407.9V800" stroke="#989898" stroke-width="1.6" stroke-dasharray="1.5625 1.5625" fill="none"/>
<path d="M243.8 407.9V800" stroke="#989898" stroke-width="3.3" stroke-dasharray="1.5625 1.5625" fill="none"/>
<path d="M14 781H18M22 769.7H27M23.5 765.2H26.1M57 752.8H61M26.5 747.2H29.1M49.8 747.2H68M47.3 741.6H50.6M66 741.6H70M72 713.4H74.7M178 707.8H180.6M843.5 707.8H849M104.5 702.2H107.1M109 702.2H111.6M159 702.2H161.6M834 702.2H840M98 696.6H100.6M828.5 696.6H832M151.7 690.9H154.3M184 690.9H186.6M82 685.3H85.4M130 685.3H132.6M137.5 685.3H141M150.5 685.3H153.1M173 685.3H175.6M866.5 685.3H868.5M880 685.3H884M133.5 679.7H136.8M190.7 679.7H196.5M824.5 679.7H826.5M865.5 679.7H867.5M868 679.7H870M93.7 674H96.3M117 674H119.6M139.3 674H141.9M210.5 674H214M221.4 674H224M224.5 674H227.1M227.3 674H229.9M873.5 674H876M86 668.4H89M142.6 668.4H146.8M194.5 668.4H198M204.8 668.4H207.4M214 668.4H220.5M819.5 668.4H822M90.5 663.9H93.1M250 662.8H253M258.5 662.8H262M239 657.2H241.6M246 657.2H249M262 657.2H267M539.4 657.2H548M268.5 651.5H270.5M521.5 651.5H523.5M535.5 651.5H539M565 651.5H567M568.5 651.5H570.5M573 651.5H575M231.3 645.9H233.9M275 645.9H278.5M298 645.9H300M519 645.9H522M534 645.9H536M550.5 645.9H554M556 645.9H563.7M711.5 645.9H713.5M714 645.9H716M817 645.9H819M240.5 640.3H243.1M277.5 640.3H288.5M334 640.3H337M585.5 640.3H588M615.5 640.3H618.5M620 640.3H622.8M684.1 640.3H687M689.3 640.3H699.6M707 640.3H709M715 640.3H717M724.7 640.3H728.4M806 640.3H809M483 634.7H486M511.5 634.7H513.5M587.4 634.7H590.3M614 634.7H622.8M625.8 634.7H633.2M637.5 634.7H639.5M679.7 634.7H682.7M704 634.7H706M727.5 634.7H729.5M1865 634.7H1867M360 629H363M509 629H511M513.3 629H516M597.7 629H600.7M634.6 629H638.3M653.8 629H662.7M671.6 629H678.2M340.3 623.4H343.7M479.5 623.4H484.5M490.5 623.4H493.5M603 623.4H606.6M735.8 623.4H744M776.5 623.4H778.5M926 623.4H928M1893 623.4H1895M307.7 617.8H309.7M343 617.8H346.5M406.5 617.8H410M457.5 617.8H459.5M487 617.8H492M737.3 617.8H744.7M773.5 617.8H775.5M1874 617.8H1876.5M1910.5 617.8H1914M1918.6 617.8H1921M1924 617.8H1926.7M343 612.1H346.5M375 612.1H377M381.5 612.1H383.5M387.5 612.1H389.5M403.7 612.1H406.5M445.8 612.1H450M456 612.1H458M464.3 612.1H467M749 612.1H753M756.5 612.1H759.5M935.5 612.1H937.5M1470 612.1H1472.5M1877 612.1H1879.5M1886.5 612.1H1889M1901.4 612.1H1907.4M1922 612.1H1924.5M326 606.5H328.5M347 606.5H349.5M366.5 606.5H368.5M382.5 606.5H384.5M414.7 606.5H416.8M438.5 606.5H440.5M441.5 606.5H443.5M465.7 606.5H470.6M752.8 606.5H755.8M763 606.5H765.5M945 606.5H948M376.8 600.9H379.6M399 600.9H402M753.5 600.9H760.2M812.5 600.9H815M928 600.9H932.6M937.5 600.9H940.5M958.5 600.9H963M1468 600.9H1470.5M1488.5 600.9H1491M318.5 595.3H321M423 595.3H426M962.3 595.3H965.3M1491 595.3H1494M1841.5 595.3H1844M896 589.6H898.5M909.5 589.6H911.5M1848.7 589.6H1855.8M968.3 584H971.4M1829 584H1831M1849.5 584H1853M902 578.4H904.5M970.6 578.4H976.7M1831.5 578.4H1838.6M904.5 572.8H907.6M985.5 572.8H990.5M1244.8 572.8H1248M1787.5 572.8H1791M1813 572.8H1817M1837 572.8H1840M1065.5 567.1H1068.5M1236.5 567.1H1242M1049.4 561.5H1051.5M1052.5 561.5H1054.8M1058.5 561.5H1060.5M1246.3 561.5H1250.2M1252.5 561.5H1254.5M1258.5 561.5H1260.5M978.5 555.9H984M1041.8 555.9H1045.6M1074.6 555.9H1080.7M1138.5 555.9H1142M1206.5 555.9H1209M1210 555.9H1212.5M1229.6 555.9H1235.7M1251 555.9H1253M1309.5 555.9H1312.5M1780.5 555.9H1784.5M1790 555.9H1793M995 550.2H998M1007.5 550.2H1009.5M1028 550.2H1031.5M1054 550.2H1056M1197 550.2H1199.5M1228 550.2H1231M1257.2 550.2H1259.2M1332.5 550.2H1334.5M1335.5 550.2H1337.5M1503.5 550.2H1509.5M1784.5 550.2H1787.5M1806 550.2H1808M998 544.6H1000M1014 544.6H1032.7M1046.5 544.6H1048.5M1055.5 544.6H1057.5M1168.5 544.6H1180.7M1191 544.6H1193M1198.3 544.6H1202.8M1222.5 544.6H1225.5M1316 544.6H1319M1337 544.6H1339M1407.5 544.6H1409.5M1423.7 544.6H1437M1782.5 544.6H1785.5M1132.5 539H1134.5M1154.8 539H1161M1182 539H1184M1186.5 539H1188.5M1192.5 539H1194.5M1307 539H1309.5M1795 539H1797M1098.3 533.4H1106M1146.5 533.4H1149.5M1267 533.4H1269M1340.5 533.4H1342.5M1376 533.4H1379M1409 533.4H1411M1418.5 533.4H1420.5M1795 533.4H1797.5M1128 527.7H1130M1271.5 527.7H1273.5M1342 527.7H1344M1120.5 524.9H1123M1086.5 522.1H1089M1109.7 522.1H1114.3M1274.5 522.1H1277.6M1404 516.5H1407M1444.5 516.5H1448M1365.6 510.8H1371.5M1364.5 505.2H1367.5M1537 505.2H1540M1346.5 499.6H1348.5M1521.5 499.6H1524.5M1529 499.6H1531.5M1767.5 499.6H1775M1669.5 494H1671.5M1295.5 488.3H1298.5M1355.5 488.3H1358M1665 488.3H1668.5M1763.5 488.3H1766.5M1355.5 482.7H1358.5M1596 482.7H1598.5M1752.5 482.7H1754.5M1590.5 477.1H1593M1638 477.1H1640.5M1707.5 477.1H1711M1720 477.1H1723M1729.5 477.1H1731.5M1586.5 471.5H1589M1653 471.5H1658.5M1682 471.5H1684M1699.8 471.5H1703M1714 471.5H1717M1743 471.5H1745M1562.5 465.8H1565.5M1587.5 465.8H1590.5M1630.5 465.8H1633.5M1685.5 465.8H1688.5M1561.5 460.2H1565.5M1593.5 460.2H1596M1608 460.2H1610.5M1660 460.2H1663.5M1688 460.2H1691M1557.5 454.6H1560.5M1567 454.6H1570M1584.5 454.6H1587.5M1635.5 454.6H1638.5M1602 448.9H1604.5M1613.5 443.3H1616.5M1580.5 432.1H1583.5" stroke="#f0e678" stroke-width="1.7" fill="none"/>
<path d="M1324 526.9V534.2M1325 526.9V534.2M1348.6 470.7V477.9M1349.6 470.7V477.9M1400.2 515.7V528.5M1401.2 515.7V528.5M1423 515.7V522.9M1424 515.7V522.9M1434.8 510V528.5M1435.8 510V528.5M1516.4 515.7V522.9M1517.4 515.7V522.9M1556.4 459.4V472.3M1557.4 459.4V472.3M1573 436.9V444.1M1574 436.9V444.1M1575 436.9V444.1M1855 588.8V601.7M1857.8 605.7V612.9M1861.5 622.6V629.8M856 684.5V691.7M857 684.5V691.7M861.5 678.9V714.2M862.5 678.9V714.2M880 684.5V691.7M907 568.6V573.5M263.5 645.1V663.6M278 645.1V652.3M282.4 633.9V641.1M346.5 611.3V618.6M355.5 617V624.2M356.5 617V624.2M360.3 622.6V629.8M362.4 622.6V629.8M390 617V624.2M391 617V624.2M407 611.3V618.6M744.7 617V624.2M754.3 605.7V612.9M755.5 600.1V607.3M781 617V629.8M782 617V629.8M784.6 617V624.2M785.6 617V624.2M795 622.6V641.1" stroke="#f0e678" stroke-width="1.6" fill="none"/>
<path d="M127.7 684.5V691.7M170.5 718.3V725.5M1290.5 453.8V466.6M1293.4 470.7V494.8M1295 493.2V500.4M1300 493.2V517.3M1303 521.3V539.8M1306 526.9V545.4M1309.6 543.8V556.7M1312.6 560.7V584.8M1315.5 521.3V545.4M1352.6 470.7V494.8M1359 493.2V511.6M1360.9 498.8V534.2M1379.3 538.2V556.7M1382.5 555.1V567.9M1449.5 543.8V556.7M1451.3 555.1V573.5M1454 577.6V601.7M1459 583.2V601.7M1494.8 588.8V596.1M1507.3 532.6V551M1510.9 538.2V551M1514 549.4V562.3M1564 459.4V466.6M1577.2 431.3V438.5M1579.3 425.6V432.9M1584.6 436.9V455.4M1589.4 459.4V466.6M1651 459.4V466.6M1727.8 476.3V483.5M1777.8 498.8V528.5M1780.8 532.6V551M1794 526.9V539.8M1841.6 583.2V590.4M1855.8 594.5V607.3M1863.9 628.2V646.7M811 611.3V624.2M818.7 650.7V669.2M823.2 667.6V674.8M876 673.2V680.5M884 695.8V703M898 594.5V601.7M920.8 572V584.8M949.8 600.1V607.3M965.3 605.7V612.9M1018.5 532.6V539.8M1032.7 538.2V545.4M1092 521.3V534.2M1094 532.6V539.8M1096 538.2V545.4M1109.4 526.9V534.2M1122.5 521.3V528.5M1152.8 510V517.3M1228 532.6V539.8M1235.7 560.7V567.9M286 628.2V641.1M292 633.9V652.3M294.8 645.1V655.1M321 597.3V607.3M325 600.1V607.3M331.3 617V629.8M334 628.2V641.1M353 605.7V612.9M356.2 622.6V629.8M370.5 611.3V618.6M393.4 617V624.2M401.4 605.7V612.9M470 611.3V618.6M482.3 622.6V629.8M495.4 628.2V635.5M543.8 650.7V663.6M579.3 633.9V652.3M605.8 628.2V635.5M610.7 633.9V641.1M693.7 639.5V646.7M766.8 600.1V607.3M768.3 600.1V607.3M787.5 622.6V635.5" stroke="#0080ff" stroke-width="3.2" fill="none"/>
<path d="M29.9 723.9V742.4M34.9 768.9V776.1M38.2 723.9V731.1M114.4 673.2V686.1M158.4 701.4V714.2M175.8 701.4V708.6M230.2 656.4V674.8M1319.2 560.7V579.2M1325.8 543.8V556.7M1328.8 532.6V551M1330.2 555.1V579.2M1389.6 566.3V579.2M1394 549.4V573.5M1402 521.3V534.2M1406.8 538.2V545.4M1417.5 521.3V528.5M1463 611.3V646.7M1473.7 600.1V629.8M1475.7 633.9V663.6M1483.3 594.5V612.9M1522 459.4V500.4M1526 504.4V528.5M1539.6 504.4V517.3M1543.2 487.5V500.4M1545.6 515.7V522.9M1554 436.9V477.9M1601 459.4V466.6M1606.7 459.4V466.6M1617.5 431.3V449.7M1620.6 448.1V461M1623.4 442.5V472.3M1664.4 470.7V489.1M1673.5 487.5V494.8M1748.8 487.5V500.4M1803.5 549.4V562.3M1822.4 572V584.8M1825 583.2V596.1M1880 617V624.2M828.5 667.6V686.1M836 695.8V708.6M841 701.4V708.6M858 695.8V703M860 701.4V708.6M865 684.5V691.7M908.3 577.6V584.8M922.3 588.8V601.7M923.8 605.7V616.9M925.8 617V629.8M985 560.7V573.5M1064.7 549.4V562.3M1114.3 521.3V528.5M1136.5 543.8V556.7M1184.8 532.6V539.8M369.2 600.1V624.2M434.7 605.7V611.3M506.7 617V629.8M517.7 633.9V652.3M594.5 628.2V641.1M710 639.5V652.3M772.8 605.7V611.3M779.4 622.6V629.8M793 611.3V629.8" stroke="#0080ff" stroke-width="1.6" fill="none"/>
<path d="M76.3 701.4V708.6M78 684.5V691.7M188.7 678.9V686.1M1280.9 493.2V500.4M1284 476.3V494.8M1285.6 470.7V483.5M1287.5 453.8V466.6M1298.6 476.3V489.1M1313.6 526.9V551M1345 498.8V517.3M1362.2 532.6V539.8M1363.8 515.7V528.5M1371.5 521.3V528.5M1385 543.8V584.8M1386.5 543.8V582M1387.7 555.1V573.5M1391.3 543.8V567.9M1412 515.7V525.7M1431 532.6V551M1437 549.4V556.7M1440 510V517.3M1443.3 504.4V511.6M1466 594.5V624.2M1477.8 617V658M1480.4 555.1V607.3M1496.5 605.7V612.9M1500 549.4V573.5M1519.7 481.9V511.6M1550 436.9V494.8M1570 436.9V444.1M1626.3 465V477.9M1635.4 442.5V455.4M1641.4 476.3V483.5M1644.3 487.5V500.4M1655 459.4V466.6M1712 481.9V489.1M1771.3 481.9V494.8M1844.6 594.5V601.7M1860.2 617V629.8M807.5 628.2V635.5M809 628.2V635.5M813.4 617V634.3M815.3 633.9V674.8M832.4 695.8V703M837.7 695.8V703M886.5 695.8V703M887 667.6V674.8M890.4 639.5V652.3M892.4 617V641.1M893.5 617V635.5M895 588.8V611.3M900 566.3V596.1M941.8 588.8V596.1M954.4 600.1V607.3M957.7 588.8V596.1M960.7 600.1V607.3M1012 543.8V551M1024.6 526.9V539.8M1084 532.6V545.4M1085.6 521.3V528.5M1090 515.7V534.2M1107.5 521.3V534.2M1144 538.2V545.4M1151.3 515.7V528.5M1221.5 543.8V551M1226 538.2V545.4M256 656.4V663.6M271.4 645.1V652.3M274.8 639.5V646.7M297.6 639.5V658M306.8 622.6V629.8M313.4 600.1V607.3M316.2 600.1V607.3M329.5 605.7V612.9M337.5 628.2V635.5M350 605.7V618.6M364.7 605.7V612.9M396.8 605.7V618.6M398.2 600.1V607.3M418.2 600.1V607.3M421.6 594.5V601.7M463.7 617V624.2M474.7 600.1V607.3M479.5 611.3V618.6M485.7 622.6V629.8M549.7 650.7V658M623.3 633.9V641.1M699.6 628.2V635.5M747 611.3V624.2M790 617V635.5" stroke="#ff0000" stroke-width="3.2" fill="none"/>
<path d="M20.8 768.9V776.1M33.2 757.7V764.9M36.5 735.1V742.4M116 667.6V674.8M1278.7 498.8V517.3M1322 538.2V584.8M1326.8 515.7V539.8M1339.4 504.4V528.5M1346 476.3V500.4M1350.4 476.3V494.8M1355.3 476.3V494.8M1395.8 572V579.2M1397.2 538.2V551M1403.4 510V517.3M1416 515.7V534.2M1457 577.6V590.4M1485 605.7V618.6M1527.6 504.4V522.9M1540.8 515.7V522.9M1547.5 487.5V511.6M1552.3 436.9V477.9M1560.7 465V483.5M1578.6 431.3V438.5M1600 459.4V466.6M1690.7 453.8V461M1804.7 543.8V551M1883 605.7V618.6M1897.3 611.3V618.6M825.5 667.6V674.8M842.7 707V714.2M850.3 701.4V708.6M863.5 684.5V695.7M889 656.4V669.2M896.2 583.2V590.4M901.5 566.3V590.4M911.4 588.8V596.1M913.6 572V579.2M916 572V584.8M919 577.6V584.8M930 600.1V607.3M977 566.3V573.5M1006.7 538.2V551M1264.7 543.8V551M1274 519.6V525.7M302.4 639.5V646.7M304.5 633.9V641.1M310.2 611.3V618.6M318.2 594.5V601.7M432 594.5V601.7M581.8 639.5V646.7M641 622.6V629.8M733.3 622.6V629.8M770.5 600.1V611.3" stroke="#ff0000" stroke-width="1.6" fill="none"/>
<text y="427.9" fill="#d0d0d0"><tspan x="12 31.3" font-size="19.3">時刻</tspan><tspan x="50.8" textLength="57" lengthAdjust="spacingAndGlyphs">:05:52</tspan> <tspan x="117.9 137.2" font-size="19.3">始値</tspan><tspan x="156.8" textLength="57" lengthAdjust="spacingAndGlyphs">:3,763</tspan> <tspan x="223.9 243.1" font-size="19.3">高値</tspan><tspan x="262.7" textLength="57" lengthAdjust="spacingAndGlyphs">:3,763</tspan> <tspan x="329.8 349.1" font-size="19.3">安値</tspan><tspan x="368.6" textLength="57" lengthAdjust="spacingAndGlyphs">:3,763</tspan> <tspan x="435.7 455" font-size="19.3">終値</tspan><tspan x="474.5" textLength="57" lengthAdjust="spacingAndGlyphs">:3,763</tspan></text>
<text y="792.4" fill="#d0d0d0"><tspan x="1480.5" textLength="18.5" lengthAdjust="spacingAndGlyphs">03</tspan></text>
<text y="816.5" fill="#d0d0d0"><tspan x="29.6" textLength="18.5" lengthAdjust="spacingAndGlyphs">03</tspan></text>
<text y="816.5" fill="#d0d0d0"><tspan x="110.8" textLength="18.5" lengthAdjust="spacingAndGlyphs">04</tspan></text>
<text y="816.5" fill="#d0d0d0"><tspan x="170.3" textLength="18.5" lengthAdjust="spacingAndGlyphs">05</tspan></text>
<text y="816.5" fill="#ffffff" font-weight="bold"><tspan x="219.3" textLength="18.5" lengthAdjust="spacingAndGlyphs">06</tspan></text>
<text y="816.5" fill="#d0d0d0"><tspan x="270.1" textLength="18.5" lengthAdjust="spacingAndGlyphs">09</tspan></text>
<text y="816.5" fill="#d0d0d0"><tspan x="366.8" textLength="18.5" lengthAdjust="spacingAndGlyphs">10</tspan></text>
<text y="816.5" fill="#d0d0d0"><tspan x="455.1" textLength="18.5" lengthAdjust="spacingAndGlyphs">11</tspan></text>
<text y="816.5" fill="#d0d0d0"><tspan x="537.1" textLength="18.5" lengthAdjust="spacingAndGlyphs">12</tspan></text>
<text y="816.5" fill="#d0d0d0"><tspan x="627.6" textLength="18.5" lengthAdjust="spacingAndGlyphs">13</tspan></text>
<text y="816.5" fill="#d0d0d0"><tspan x="712.1" textLength="18.5" lengthAdjust="spacingAndGlyphs">14</tspan></text>
<text y="816.5" fill="#d0d0d0"><tspan x="773.6" textLength="18.5" lengthAdjust="spacingAndGlyphs">15</tspan></text>
<text y="816.5" fill="#d0d0d0"><tspan x="817.1" textLength="18.5" lengthAdjust="spacingAndGlyphs">16</tspan></text>
<text y="816.5" fill="#d0d0d0"><tspan x="863.6" textLength="18.5" lengthAdjust="spacingAndGlyphs">17</tspan></text>
<text y="816.5" fill="#d0d0d0"><tspan x="956.3" textLength="18.5" lengthAdjust="spacingAndGlyphs">18</tspan></text>
<text y="816.5" fill="#d0d0d0"><tspan x="1041.9" textLength="18.5" lengthAdjust="spacingAndGlyphs">19</tspan></text>
<text y="816.5" fill="#d0d0d0"><tspan x="1123.6" textLength="18.5" lengthAdjust="spacingAndGlyphs">20</tspan></text>
<text y="816.5" fill="#d0d0d0"><tspan x="1198.5" textLength="18.5" lengthAdjust="spacingAndGlyphs">21</tspan></text>
<text y="816.5" fill="#d0d0d0"><tspan x="1291" textLength="18.5" lengthAdjust="spacingAndGlyphs">22</tspan></text>
<text y="816.5" fill="#d0d0d0"><tspan x="1386.1" textLength="18.5" lengthAdjust="spacingAndGlyphs">23</tspan></text>
<text y="816.5" fill="#d0d0d0"><tspan x="1479.6" textLength="18.5" lengthAdjust="spacingAndGlyphs">00</tspan></text>
<text y="816.5" fill="#d0d0d0"><tspan x="1576.4" textLength="18.5" lengthAdjust="spacingAndGlyphs">01</tspan></text>
<text y="816.5" fill="#d0d0d0"><tspan x="1670" textLength="18.5" lengthAdjust="spacingAndGlyphs">02</tspan></text>
<text y="816.5" fill="#d0d0d0"><tspan x="1743.3" textLength="18.5" lengthAdjust="spacingAndGlyphs">03</tspan></text>
<text y="816.5" fill="#d0d0d0"><tspan x="1796.7" textLength="18.5" lengthAdjust="spacingAndGlyphs">04</tspan></text>
<text y="816.5" fill="#d0d0d0"><tspan x="1863.7" textLength="18.5" lengthAdjust="spacingAndGlyphs">05</tspan></text>
<text y="816.5" fill="#d0d0d0"><tspan x="1902.6" textLength="18.5" lengthAdjust="spacingAndGlyphs">06</tspan></text>
<text y="457.3" fill="#d0d0d0"><tspan x="1933.1" textLength="47.4" lengthAdjust="spacingAndGlyphs">3,790</tspan></text>
<text y="513.6" fill="#d0d0d0"><tspan x="1933.1" textLength="47.4" lengthAdjust="spacingAndGlyphs">3,780</tspan></text>
<text y="569.9" fill="#d0d0d0"><tspan x="1933.1" textLength="47.4" lengthAdjust="spacingAndGlyphs">3,770</tspan></text>
<text y="682.4" fill="#d0d0d0"><tspan x="1933.1" textLength="47.4" lengthAdjust="spacingAndGlyphs">3,750</tspan></text>
<text y="738.7" fill="#d0d0d0"><tspan x="1933.1" textLength="47.4" lengthAdjust="spacingAndGlyphs">3,740</tspan></text>
<text y="794.9" fill="#d0d0d0"><tspan x="1933.1" textLength="47.4" lengthAdjust="spacingAndGlyphs">3,730</tspan></text>
<rect x="1931" y="600.7" width="93.3" height="34.6" fill="#d4d4d4"/>
<text y="622.8" fill="#000" font-weight="bold"><tspan x="1951.5" textLength="49.2" lengthAdjust="spacingAndGlyphs">3,762</tspan></text>
<rect x="9.6" y="832" width="2014.7" height="243.9" fill="#1b1b1b"/>
<rect x="10.3" y="833.6" width="1921.5" height="218.8" fill="#000" stroke="#f4f4f4" stroke-width="1.7"/>
<path d="M11.3 867.9H1930.8M11.3 933.6H1930.8M11.3 999.3H1930.8M28.5 834.6V1051.4M110.2 834.6V1051.4M169.6 834.6V1051.4M269.4 834.6V1051.4M365 834.6V1051.4M453.8 834.6V1051.4M534.8 834.6V1051.4M625.4 834.6V1051.4M709.5 834.6V1051.4M796.1 834.6V1051.4M814.7 834.6V1051.4M861.3 834.6V1051.4M953.7 834.6V1051.4M1039.7 834.6V1051.4M1122.2 834.6V1051.4M1197.5 834.6V1051.4M1289.5 834.6V1051.4M1384.8 834.6V1051.4M1478.6 834.6V1051.4M1575.5 834.6V1051.4M1669.2 834.6V1051.4M1742.3 834.6V1051.4M1795.6 834.6V1051.4M1862.9 834.6V1051.4M1927.3 834.6V1051.4" stroke="#989898" stroke-width="1.6" stroke-dasharray="1.5625 1.5625" fill="none"/>
<path d="M243.8 834.6V1051.4" stroke="#989898" stroke-width="3.3" stroke-dasharray="1.5625 1.5625" fill="none"/>
<path d="M14 851.4L15.6 848.2L17.2 846.3L18.8 845.7L20.4 845.5L22 850L23.6 849.8L25.2 848.1L26.8 850.3L28.4 851.6L30 855.6L31.6 858.3L33.2 858.8L34.8 858.2L36.4 858.8L38 870L39.6 875.3L41.2 872.4L42.8 870.1L44.4 871.6L46 871.8L47.6 872L49.2 872.2L50.8 871.1L52.4 866.9L54 865.6L55.6 866.9L57.2 868.2L58.8 868.3L60.4 867.6L62 868.2L63.6 868.4L65.2 867.3L66.8 867.4L68.4 868.9L70 870.1L71.6 871.3L73.2 873.3L74.8 879.5L76.4 884.9L78 889.7L79.6 895.8L81.2 893.9L82.8 893.3L84.4 892.6L86 895.2L87.6 898.4L89.2 900.1L90.8 904L92.4 906.5L94 908.4L95.6 906.4L97.2 904.4L98.8 898.2L100.4 895.7L102 896L103.6 897.6L105.2 897.5L106.8 893.3L108.4 894.3L110 891.4L111.6 888.6L113.2 888.4L114.8 887.8L116.4 892.2L118 896.5L119.6 895.6L121.2 894.6L122.8 893.7L124.4 892.8L126 892L127.6 889.9L129.2 890.7L130.8 891.4L132.4 894.7L134 896.4L135.6 896.5L137.2 900.5L138.8 899.9L140.4 899.6L142 899.2L143.6 902.3L145.2 901.8L146.8 905.1L148.4 902.3L150 900.8L151.6 899.5L153.2 896.2L154.8 892.9L156.4 891.8L158 889.3L159.6 886.7L161.2 889L162.8 889.1L164.4 891.8L166 893.4L167.6 896.3L169.2 897.9L170.8 901.2L172.4 900.3L174 899.8L175.6 896.1L177.2 895L178.8 892.3L180.4 892.3L182 891.1L183.6 893.3L185.2 894.1L186.8 894.1L188.4 898.9L190 902.5L191.6 901.8L193.2 902.5L194.8 899.5L196.4 903.5L198 905.6L199.6 905.6L201.2 905.5L202.8 904.1L204.4 905.3L206 905.4L207.6 906.3L209.2 907.2L210.8 906.8L212.4 907.5L214 910.5L215.6 910.9L217.2 910L218.8 909.1L220.4 910.3L222 910.4L223.6 907.9L225.2 906.8L226.8 905.8L228.4 906.7L230 907.9L231.6 908.8L233.2 912.5L234.8 916.4L236.4 917.7L238 919L239.6 920.4L241.2 923.3L242.8 923.8L244.4 923.6L246 919.5L247.6 918L249.2 915.4L250.8 913.5L252.4 912.8L254 910.9L255.6 911.6L257.2 910.9L258.8 910.3L260.4 909.6L262 909.4L263.6 906.7L265.2 907.5L266.8 906.4L268.4 906.5L270 908.1L271.6 911.8L273.2 915.2L274.8 917.8L276.4 917.8L278 917.9L279.6 917.9L281.2 916.7L282.8 918L284.4 919.4L286 918.2L287.6 920.2L289.2 923.2L290.8 922.6L292.4 919.7L294 919.2L295.6 917.4L297.2 917.2L298.8 919L300.4 920.8L302 921.1L303.6 921.4L305.2 924L306.8 925.9L308.4 923.9L310 925.8L311.6 926.4L313.2 928.8L314.8 930L316.4 931.7L318 932.1L319.6 932.6L321.2 933.2L322.8 934.4L324.4 936.9L326 934.4L327.6 935.5L329.2 936.5L330.8 934.9L332.4 929.8L334 926.5L335.6 924.3L337.2 927.1L338.8 932.6L340.4 931.2L342 930.4L343.6 930.2L345.2 931.3L346.8 931.9L348.4 931.8L350 931.7L351.6 931.7L353.2 931.6L354.8 931.5L356.4 931.3L358 928.1L359.6 928.6L361.2 926.7L362.8 926.9L364.4 928.9L366 930.6L367.6 932.2L369.2 930.5L370.8 929.9L372.4 928L374 929L375.6 931.2L377.2 933.6L378.8 935L380.4 935.7L382 936.6L383.6 936.4L385.2 936.3L386.8 936.2L388.4 938.6L390 939.6L391.6 940.6L393.2 938.3L394.8 938.7L396.4 937.6L398 938.8L399.6 939.9L401.2 937L402.8 936.7L404.4 935.3L406 934L407.6 931.4L409.2 932.2L410.8 931.7L412.4 933.8L414 934.3L415.6 934.7L417.2 935.7L418.8 939.7L420.4 939.4L422 941.6L423.6 942.6L425.2 942L426.8 940.7L428.4 942.8L430 941.5L431.6 944.1L433.2 942.6L434.8 942.5L436.4 934.4L438 932.7L439.6 933.6L441.2 934.2L442.8 935.4L444.4 936.7L446 935.1L447.6 935.2L449.2 933.1L450.8 932.5L452.4 935.7L454 936L455.6 934.5L457.2 933L458.8 934.1L460.4 934.7L462 933.6L463.6 931.5L465.2 933.8L466.8 933.6L468.4 933.8L470 933.5L471.6 932L473.2 929.8L474.8 936.9L476.4 941L478 940.3L479.6 938.5L481.2 935.3L482.8 933.7L484.4 934L486 933.2L487.6 940.5L489.2 940.4L490.8 941.5L492.4 941.4L494 941L495.6 936.7L497.2 937.3L498.8 937.7L500.4 939.4L502 936.5L503.6 936.1L505.2 936.8L506.8 939.8L508.4 941.7L510 940.3L511.6 940.1L513.2 939.6L514.8 936.2L516.4 937.7L518 939.4L519.6 936.2L521.2 933.2L522.8 931.3L524.4 929.5L526 928.6L527.6 928.4L529.2 933.3L530.8 935.7L532.4 935.7L534 934.4L535.6 934.4L537.2 934.4L538.8 934.4L540.4 934.4L542 933.1L543.6 934.4L545.2 934.4L546.8 934.4L548.4 935.3L550 936.5L551.6 937.6L553.2 937L554.8 937.7L556.4 940.9L558 940.3L559.6 940L561.2 939.5L562.8 939.6L564.4 942.5L566 942L567.6 940.2L569.2 940.9L570.8 941.6L572.4 941L574 939L575.6 938.4L577.2 937.8L578.8 935.8L580.4 936.5L582 940.8L583.6 942.5L585.2 942.5L586.8 942.5L588.4 942.5L590 942.5L591.6 943.8L593.2 942.5L594.8 943.8L596.4 943.8L598 941.2L599.6 941.2L601.2 942.5L602.8 942.5L604.4 942.5L606 943.8L607.6 942.5L609.2 943.8L610.8 942.5L612.4 941.8L614 934.3L615.6 937.8L617.2 939L618.8 936.9L620.4 936L622 935L623.6 935.1L625.2 936.5L626.8 937.6L628.4 937.3L630 934.4L631.6 932.6L633.2 934.9L634.8 935.8L636.4 936.2L638 937.8L639.6 938.8L641.2 942.4L642.8 943.8L644.4 942.5L646 942.5L647.6 942.5L649.2 942.5L650.8 942.5L652.4 942.5L654 942.5L655.6 941.2L657.2 942.5L658.8 941.2L660.4 942.5L662 943.8L663.6 941.4L665.2 940.2L666.8 940.2L668.4 940.4L670 940.8L671.6 941.7L673.2 943L674.8 940.8L676.4 941.2L678 943.7L679.6 943.5L681.2 944.7L682.8 945L684.4 943.5L686 940.3L687.6 939.8L689.2 940.6L690.8 940.2L692.4 938.6L694 938.3L695.6 937.5L697.2 938.4L698.8 939.5L700.4 940.8L702 945.5L703.6 945.5L705.2 944.2L706.8 944.2L708.4 944.2L710 944.8L711.6 941.8L713.2 938.8L714.8 940.1L716.4 940.1L718 940.3L719.6 941.9L721.2 943.5L722.8 946.8L724.4 947.8L726 948.3L727.6 947.9L729.2 946.4L730.8 949.8L732.4 949.3L734 948.8L735.6 950.8L737.2 947.6L738.8 948.9L740.4 948.2L742 950.1L743.6 949.7L745.2 953.2L746.8 954.1L748.4 950.9L750 951.4L751.6 951.8L753.2 950.9L754.8 950.7L756.4 952.8L758 950L759.6 950.2L761.2 951.5L762.8 950.2L764.4 950.2L766 950.2L767.6 950.2L769.2 948.9L770.8 952.3L772.4 951.8L774 950L775.6 949.8L777.2 949.4L778.8 947.7L780.4 947.3L782 946.7L783.6 948.6L785.2 945.1L786.8 943L788.4 941.3L790 944.9L791.6 944.4L793.2 942.1L794.8 939.9L796.4 938.9L798 939.4L799.6 941.5L801.2 941.6L802.8 941.7L804.4 941.8L806 941.9L807.6 942L809.2 941.3L810.8 948.4L812.4 950.6L814 954.1L815.6 965L817.2 962.9L818.8 950.8L820.4 951.1L822 952.7L823.6 956.2L825.2 955.6L826.8 952.7L828.4 950.3L830 953.2L831.6 955.2L833.2 958.4L834.8 958.5L836.4 950.9L838 953.4L839.6 951.8L841.2 956.7L842.8 958L844.4 955.4L846 952.8L847.6 951.9L849.2 950.5L850.8 952.9L852.4 949L854 952.9L855.6 947.9L857.2 949.5L858.8 953.9L860.4 950.1L862 948.6L863.6 950.2L865.2 955.7L866.8 956L868.4 954.5L870 952.9L871.6 952.1L873.2 955L874.8 954.4L876.4 954.4L878 958.2L879.6 958.5L881.2 958L882.8 951.3L884.4 948.5L886 951.8L887.6 952.4L889.2 961.1L890.8 963.4L892.4 970.2L894 972.3L895.6 977.1L897.2 983.8L898.8 979.3L900.4 984.4L902 987.9L903.6 986.5L905.2 986.3L906.8 986.2L908.4 983.4L910 979.5L911.6 980.8L913.2 988.8L914.8 993.9L916.4 994.2L918 994.5L919.6 991.9L921.2 989.2L922.8 985.2L924.4 979.5L926 972.4L927.6 974.6L929.2 976.2L930.8 983.7L932.4 986.5L934 986.6L935.6 982.7L937.2 978.8L938.8 984.4L940.4 985L942 987.2L943.6 987.1L945.2 986.9L946.8 985.4L948.4 979L950 976.8L951.6 976.9L953.2 979.7L954.8 982.9L956.4 981.6L958 980.3L959.6 981.6L961.2 980.6L962.8 978.6L964.4 976.6L966 976.9L967.6 979.2L969.2 974.6L970.8 979.9L972.4 984.8L974 986.7L975.6 985.2L977.2 984.2L978.8 984.7L980.4 985.3L982 987.4L983.6 986.3L985.2 984.4L986.8 983.2L988.4 982.7L990 982.2L991.6 981.6L993.2 981.4L994.8 984.1L996.4 988.7L998 996.5L999.6 997.6L1001.2 993.5L1002.8 996.1L1004.4 996.4L1006 997.7L1007.6 997.6L1009.2 997.5L1010.8 997.4L1012.4 1000.2L1014 1002.7L1015.6 1000.6L1017.2 1001.1L1018.8 1001.4L1020.4 1002.5L1022 1001.2L1023.6 1000.8L1025.2 1001.9L1026.8 1006.9L1028.4 1000.1L1030 993.7L1031.6 993L1033.2 994.7L1034.8 993.1L1036.4 994.1L1038 993.7L1039.6 996.3L1041.2 997.3L1042.8 994.1L1044.4 993.8L1046 992.2L1047.6 990.6L1049.2 987.7L1050.8 984.8L1052.4 983.6L1054 987L1055.6 989L1057.2 989.3L1058.8 990.1L1060.4 984L1062 982.3L1063.6 980.2L1065.2 982L1066.8 983.3L1068.4 983.4L1070 984.2L1071.6 986.3L1073.2 987.5L1074.8 989.1L1076.4 990.7L1078 990.4L1079.6 991.6L1081.2 995.4L1082.8 997.9L1084.4 1002.1L1086 1003.3L1087.6 1004.9L1089.2 1007.8L1090.8 1011L1092.4 1007.4L1094 1001.7L1095.6 1000L1097.2 999.6L1098.8 1002.9L1100.4 1002.6L1102 1002.5L1103.6 998L1105.2 997.4L1106.8 999.9L1108.4 1000L1110 999.3L1111.6 1000.3L1113.2 1000.8L1114.8 1000.8L1116.4 1000.8L1118 1002.9L1119.6 1002.7L1121.2 1005.5L1122.8 1005.8L1124.4 1000.9L1126 998.6L1127.6 996.1L1129.2 996.2L1130.8 1000.8L1132.4 998.1L1134 999L1135.6 996.7L1137.2 992.1L1138.8 990.8L1140.4 992.1L1142 992.1L1143.6 993.7L1145.2 997.8L1146.8 998.6L1148.4 1000.7L1150 999.4L1151.6 1002.3L1153.2 1003.9L1154.8 1003.9L1156.4 1003.6L1158 1000.6L1159.6 998.1L1161.2 997.3L1162.8 995.7L1164.4 997.8L1166 998.5L1167.6 997.8L1169.2 999.7L1170.8 997.9L1172.4 995.9L1174 992.9L1175.6 991.5L1177.2 992.1L1178.8 992.1L1180.4 992.1L1182 993.4L1183.6 990.8L1185.2 992.1L1186.8 993.3L1188.4 996L1190 993.7L1191.6 995.4L1193.2 995.7L1194.8 996.7L1196.4 999.5L1198 1002.1L1199.6 999.4L1201.2 995L1202.8 992.6L1204.4 993.3L1206 994.7L1207.6 993.4L1209.2 990.8L1210.8 991.5L1212.4 991.3L1214 991.1L1215.6 990.9L1217.2 990.7L1218.8 991.6L1220.4 993.7L1222 994.2L1223.6 995.8L1225.2 997.1L1226.8 994.4L1228.4 991.1L1230 990.8L1231.6 990.5L1233.2 990.2L1234.8 989.6L1236.4 987.7L1238 985.8L1239.6 984.8L1241.2 985.3L1242.8 981.8L1244.4 983.5L1246 985.6L1247.6 985.4L1249.2 987.8L1250.8 989.2L1252.4 988L1254 986.8L1255.6 988.2L1257.2 989.2L1258.8 992.7L1260.4 993.8L1262 991.9L1263.6 993.8L1265.2 995.8L1266.8 998.9L1268.4 1001.8L1270 1003.2L1271.6 1002.7L1273.2 1003.5L1274.8 1005.2L1276.4 1007.1L1278 1009L1279.6 1010.9L1281.2 1016.2L1282.8 1020.2L1284.4 1023.8L1286 1027.4L1287.6 1032.3L1289.2 1039.5L1290.8 1034.5L1292.4 1025.2L1294 1022.8L1295.6 1017.5L1297.2 1026.8L1298.8 1027.6L1300.4 1024.8L1302 1018.3L1303.6 1013.5L1305.2 1011.3L1306.8 1008.6L1308.4 1009.8L1310 1008.5L1311.6 1005.5L1313.2 1003L1314.8 992.4L1316.4 995.7L1318 996.9L1319.6 992.1L1321.2 992.7L1322.8 996.5L1324.4 1004.2L1326 1006.1L1327.6 998.1L1329.2 991.1L1330.8 983.4L1332.4 984.5L1334 988.9L1335.6 993.5L1337.2 993.7L1338.8 995.5L1340.4 1000L1342 999.5L1343.6 995.5L1345.2 998L1346.8 1001.7L1348.4 1001.7L1350 1005.6L1351.6 1018.2L1353.2 1011.9L1354.8 1016.2L1356.4 1018.7L1358 1018.8L1359.6 1014L1361.2 1009.3L1362.8 1007.2L1364.4 1006.1L1366 1006.8L1367.6 1006.3L1369.2 1003.2L1370.8 1001.7L1372.4 1001.4L1374 999.6L1375.6 993.8L1377.2 995.6L1378.8 989.4L1380.4 984.5L1382 983.3L1383.6 982.6L1385.2 989.5L1386.8 990.7L1388.4 993.1L1390 994.6L1391.6 993.9L1393.2 995.7L1394.8 992.2L1396.4 994.3L1398 993.9L1399.6 999.3L1401.2 1009.1L1402.8 1007.3L1404.4 1006.2L1406 1010.1L1407.6 1000.5L1409.2 997.8L1410.8 1000L1412.4 1007L1414 1013.4L1415.6 1009.4L1417.2 1011.7L1418.8 1009.1L1420.4 1009.2L1422 1006.8L1423.6 1010.5L1425.2 1008.1L1426.8 1007.2L1428.4 1007.9L1430 1007.5L1431.6 1004.9L1433.2 1005.4L1434.8 1005.2L1436.4 1002.8L1438 998.5L1439.6 997.3L1441.2 998.3L1442.8 1006.9L1444.4 1006.4L1446 1008.9L1447.6 1009.3L1449.2 1010.9L1450.8 998.2L1452.4 999.2L1454 995.3L1455.6 990L1457.2 988.6L1458.8 991.1L1460.4 990.6L1462 985.8L1463.6 986.2L1465.2 990.4L1466.8 989.9L1468.4 988L1470 995.4L1471.6 993.1L1473.2 991.7L1474.8 986.8L1476.4 984.6L1478 990.2L1479.6 977.5L1481.2 971L1482.8 975.8L1484.4 974.2L1486 975L1487.6 972.6L1489.2 972.8L1490.8 977.7L1492.4 980.7L1494 983.1L1495.6 986.8L1497.2 981.2L1498.8 972.5L1500.4 981.2L1502 993.3L1503.6 991.9L1505.2 990L1506.8 989.1L1508.4 987.4L1510 986.3L1511.6 985.7L1513.2 986.3L1514.8 980.3L1516.4 984.8L1518 988.8L1519.6 991.2L1521.2 985L1522.8 981L1524.4 965.3L1526 977.4L1527.6 984.2L1529.2 985.4L1530.8 984.1L1532.4 984.1L1534 984.1L1535.6 981.5L1537.2 986.7L1538.8 983.9L1540.4 982.2L1542 980.6L1543.6 977.2L1545.2 975.1L1546.8 975.7L1548.4 982L1550 987L1551.6 989.7L1553.2 989.3L1554.8 988.7L1556.4 985.8L1558 990.6L1559.6 990.5L1561.2 989.9L1562.8 982.4L1564.4 978.2L1566 975.2L1567.6 981.5L1569.2 979.7L1570.8 987.3L1572.4 990.7L1574 990L1575.6 988L1577.2 987L1578.8 990.5L1580.4 990.1L1582 987.9L1583.6 984.4L1585.2 982.8L1586.8 979.3L1588.4 977.1L1590 975.2L1591.6 974.2L1593.2 977.1L1594.8 982.2L1596.4 988L1598 981.9L1599.6 981.4L1601.2 979.5L1602.8 983.5L1604.4 988L1606 986.4L1607.6 988.6L1609.2 986.9L1610.8 986.3L1612.4 986.2L1614 987.1L1615.6 988L1617.2 987.8L1618.8 985L1620.4 986.1L1622 984.7L1623.6 984.8L1625.2 983.4L1626.8 983.4L1628.4 992.4L1630 994.3L1631.6 993.6L1633.2 995.3L1634.8 988.5L1636.4 988.8L1638 992.2L1639.6 983.8L1641.2 978.3L1642.8 971.2L1644.4 970.9L1646 968L1647.6 967.7L1649.2 972.2L1650.8 973.7L1652.4 978.8L1654 984.8L1655.6 982.9L1657.2 980.4L1658.8 969.2L1660.4 967.7L1662 973.1L1663.6 973.3L1665.2 965.7L1666.8 962.5L1668.4 962.5L1670 965.1L1671.6 963.8L1673.2 965.1L1674.8 966.4L1676.4 962.5L1678 966.4L1679.6 962.8L1681.2 962.9L1682.8 962L1684.4 963.3L1686 968.1L1687.6 967.3L1689.2 968.5L1690.8 973L1692.4 971L1694 974.3L1695.6 971.4L1697.2 971.2L1698.8 973.5L1700.4 974.5L1702 974.1L1703.6 972.7L1705.2 972.8L1706.8 975.5L1708.4 978.4L1710 977.9L1711.6 972.1L1713.2 974.1L1714.8 977L1716.4 979.8L1718 976.4L1719.6 976.2L1721.2 975.4L1722.8 976L1724.4 978.8L1726 977.4L1727.6 977.3L1729.2 981.9L1730.8 976.6L1732.4 979.1L1734 977.5L1735.6 975.7L1737.2 976.6L1738.8 969.8L1740.4 971.7L1742 975.9L1743.6 970.8L1745.2 967L1746.8 965.2L1748.4 959.3L1750 955.4L1751.6 957.8L1753.2 963.7L1754.8 966.7L1756.4 967.8L1758 967.7L1759.6 964.8L1761.2 965.1L1762.8 965.1L1764.4 967.7L1766 967.7L1767.6 961.4L1769.2 963.2L1770.8 957.3L1772.4 963.2L1774 964.9L1775.6 964.4L1777.2 961.4L1778.8 954.1L1780.4 944L1782 934.9L1783.6 934.4L1785.2 936.2L1786.8 935.5L1788.4 939.2L1790 938.2L1791.6 934.9L1793.2 932.5L1794.8 936.8L1796.4 941.7L1798 941.9L1799.6 945.9L1801.2 944.8L1802.8 943.7L1804.4 935.7L1806 935.6L1807.6 933.8L1809.2 932.4L1810.8 931.4L1812.4 934.5L1814 936.7L1815.6 929.5L1817.2 925L1818.8 924L1820.4 925.5L1822 927L1823.6 917.6L1825.2 917.1L1826.8 919.4L1828.4 921.8L1830 923.3L1831.6 926.3L1833.2 930.8L1834.8 925.8L1836.4 924.2L1838 926.6L1839.6 927.6L1841.2 928.8L1842.8 924L1844.4 921.2L1846 920.6L1847.6 918L1849.2 922.7L1850.8 926.4L1852.4 929.5L1854 926.3L1855.6 926.3L1857.2 918.1L1858.8 915.9L1860.4 916L1862 916.5L1863.6 916.7L1865.2 911.8L1866.8 914.3L1868.4 916.2L1870 916.2L1871.6 914.9L1873.2 916.2L1874.8 914.9L1876.4 911L1878 914.3L1879.6 914L1881.2 916.2L1882.8 920.2L1884.4 921.3L1886 920.2L1887.6 918.6L1889.2 915.4L1890.8 917.6L1892.4 919.9L1894 918.5L1895.6 919.5L1897.2 919L1898.8 924L1900.4 922.9L1902 926.3L1903.6 925.3L1905.2 926.6L1906.8 926.6L1908.4 925.3L1910 927.4L1911.6 927.3L1913.2 929L1914.8 929L1916.4 928.7L1918 922.9L1919.6 926.8L1921.2 926.8L1922.8 921.7L1924.4 923.1L1926 924.4L1927.6 919.5L1929.2 919.8" stroke="#ff0000" stroke-width="3.2" fill="none" stroke-linejoin="round"/>
<text y="854.6" fill="#d0d0d0"><tspan x="12.3" textLength="8.8" lengthAdjust="spacingAndGlyphs">[</tspan><tspan x="21.6" font-size="19.3">金</tspan> <tspan x="50.8" textLength="105.1" lengthAdjust="spacingAndGlyphs">22/12 6,641</tspan><tspan x="156.4" font-size="19.3" font-family="IPAGothic,monospace">×</tspan><tspan x="176" textLength="47.4" lengthAdjust="spacingAndGlyphs">1.00]</tspan><tspan x="223.9" font-size="19.3">－</tspan><tspan x="243.4" textLength="8.8" lengthAdjust="spacingAndGlyphs">[</tspan><tspan x="252.7 272" font-size="19.3">白金</tspan> <tspan x="301.2" textLength="105.1" lengthAdjust="spacingAndGlyphs">22/12 3,763</tspan><tspan x="406.8" font-size="19.3" font-family="IPAGothic,monospace">×</tspan><tspan x="426.4" textLength="47.4" lengthAdjust="spacingAndGlyphs">1.00]</tspan> <tspan x="483.9 503.1" font-size="19.3">終値</tspan> <tspan x="532 551.3" font-size="19.3">時刻</tspan><tspan x="570.8" textLength="114.8" lengthAdjust="spacingAndGlyphs">:05:52 2,878</tspan></text>
<text y="1044.2" fill="#d0d0d0"><tspan x="1480.5" textLength="18.5" lengthAdjust="spacingAndGlyphs">03</tspan></text>
<text y="1067.9" fill="#d0d0d0"><tspan x="29.6" textLength="18.5" lengthAdjust="spacingAndGlyphs">03</tspan></text>
<text y="1067.9" fill="#d0d0d0"><tspan x="110.8" textLength="18.5" lengthAdjust="spacingAndGlyphs">04</tspan></text>
<text y="1067.9" fill="#d0d0d0"><tspan x="170.3" textLength="18.5" lengthAdjust="spacingAndGlyphs">05</tspan></text>
<text y="1067.9" fill="#ffffff" font-weight="bold"><tspan x="219.3" textLength="18.5" lengthAdjust="spacingAndGlyphs">06</tspan></text>
<text y="1067.9" fill="#d0d0d0"><tspan x="270.1" textLength="18.5" lengthAdjust="spacingAndGlyphs">09</tspan></text>
<text y="1067.9" fill="#d0d0d0"><tspan x="366.8" textLength="18.5" lengthAdjust="spacingAndGlyphs">10</tspan></text>
<text y="1067.9" fill="#d0d0d0"><tspan x="455.1" textLength="18.5" lengthAdjust="spacingAndGlyphs">11</tspan></text>
<text y="1067.9" fill="#d0d0d0"><tspan x="537.1" textLength="18.5" lengthAdjust="spacingAndGlyphs">12</tspan></text>
<text y="1067.9" fill="#d0d0d0"><tspan x="627.6" textLength="18.5" lengthAdjust="spacingAndGlyphs">13</tspan></text>
<text y="1067.9" fill="#d0d0d0"><tspan x="712.1" textLength="18.5" lengthAdjust="spacingAndGlyphs">14</tspan></text>
<text y="1067.9" fill="#d0d0d0"><tspan x="773.6" textLength="18.5" lengthAdjust="spacingAndGlyphs">15</tspan></text>
<text y="1067.9" fill="#d0d0d0"><tspan x="817.1" textLength="18.5" lengthAdjust="spacingAndGlyphs">16</tspan></text>
<text y="1067.9" fill="#d0d0d0"><tspan x="863.6" textLength="18.5" lengthAdjust="spacingAndGlyphs">17</tspan></text>
<text y="1067.9" fill="#d0d0d0"><tspan x="956.3" textLength="18.5" lengthAdjust="spacingAndGlyphs">18</tspan></text>
<text y="1067.9" fill="#d0d0d0"><tspan x="1041.9" textLength="18.5" lengthAdjust="spacingAndGlyphs">19</tspan></text>
<text y="1067.9" fill="#d0d0d0"><tspan x="1123.6" textLength="18.5" lengthAdjust="spacingAndGlyphs">20</tspan></text>
<text y="1067.9" fill="#d0d0d0"><tspan x="1198.5" textLength="18.5" lengthAdjust="spacingAndGlyphs">21</tspan></text>
<text y="1067.9" fill="#d0d0d0"><tspan x="1291" textLength="18.5" lengthAdjust="spacingAndGlyphs">22</tspan></text>
<text y="1067.9" fill="#d0d0d0"><tspan x="1386.1" textLength="18.5" lengthAdjust="spacingAndGlyphs">23</tspan></text>
<text y="1067.9" fill="#d0d0d0"><tspan x="1479.6" textLength="18.5" lengthAdjust="spacingAndGlyphs">00</tspan></text>
<text y="1067.9" fill="#d0d0d0"><tspan x="1576.4" textLength="18.5" lengthAdjust="spacingAndGlyphs">01</tspan></text>
<text y="1067.9" fill="#d0d0d0"><tspan x="1670" textLength="18.5" lengthAdjust="spacingAndGlyphs">02</tspan></text>
<text y="1067.9" fill="#d0d0d0"><tspan x="1743.3" textLength="18.5" lengthAdjust="spacingAndGlyphs">03</tspan></text>
<text y="1067.9" fill="#d0d0d0"><tspan x="1796.7" textLength="18.5" lengthAdjust="spacingAndGlyphs">04</tspan></text>
<text y="1067.9" fill="#d0d0d0"><tspan x="1863.7" textLength="18.5" lengthAdjust="spacingAndGlyphs">05</tspan></text>
<text y="1067.9" fill="#d0d0d0"><tspan x="1902.6" textLength="18.5" lengthAdjust="spacingAndGlyphs">06</tspan></text>
<text y="865" fill="#d0d0d0"><tspan x="1933.1" textLength="47.4" lengthAdjust="spacingAndGlyphs">2,900</tspan></text>
<text y="996.4" fill="#d0d0d0"><tspan x="1933.1" textLength="47.4" lengthAdjust="spacingAndGlyphs">2,850</tspan></text>
<text y="1061.2" fill="#d0d0d0"><tspan x="1933.1" textLength="47.4" lengthAdjust="spacingAndGlyphs">2,825</tspan></text>
<rect x="1931" y="903.5" width="93.3" height="34.6" fill="#d4d4d4"/>
<text y="925.6" fill="#000" font-weight="bold"><tspan x="1951.5" textLength="49.2" lengthAdjust="spacingAndGlyphs">2,880</tspan></text>
</svg>
</body></html>
